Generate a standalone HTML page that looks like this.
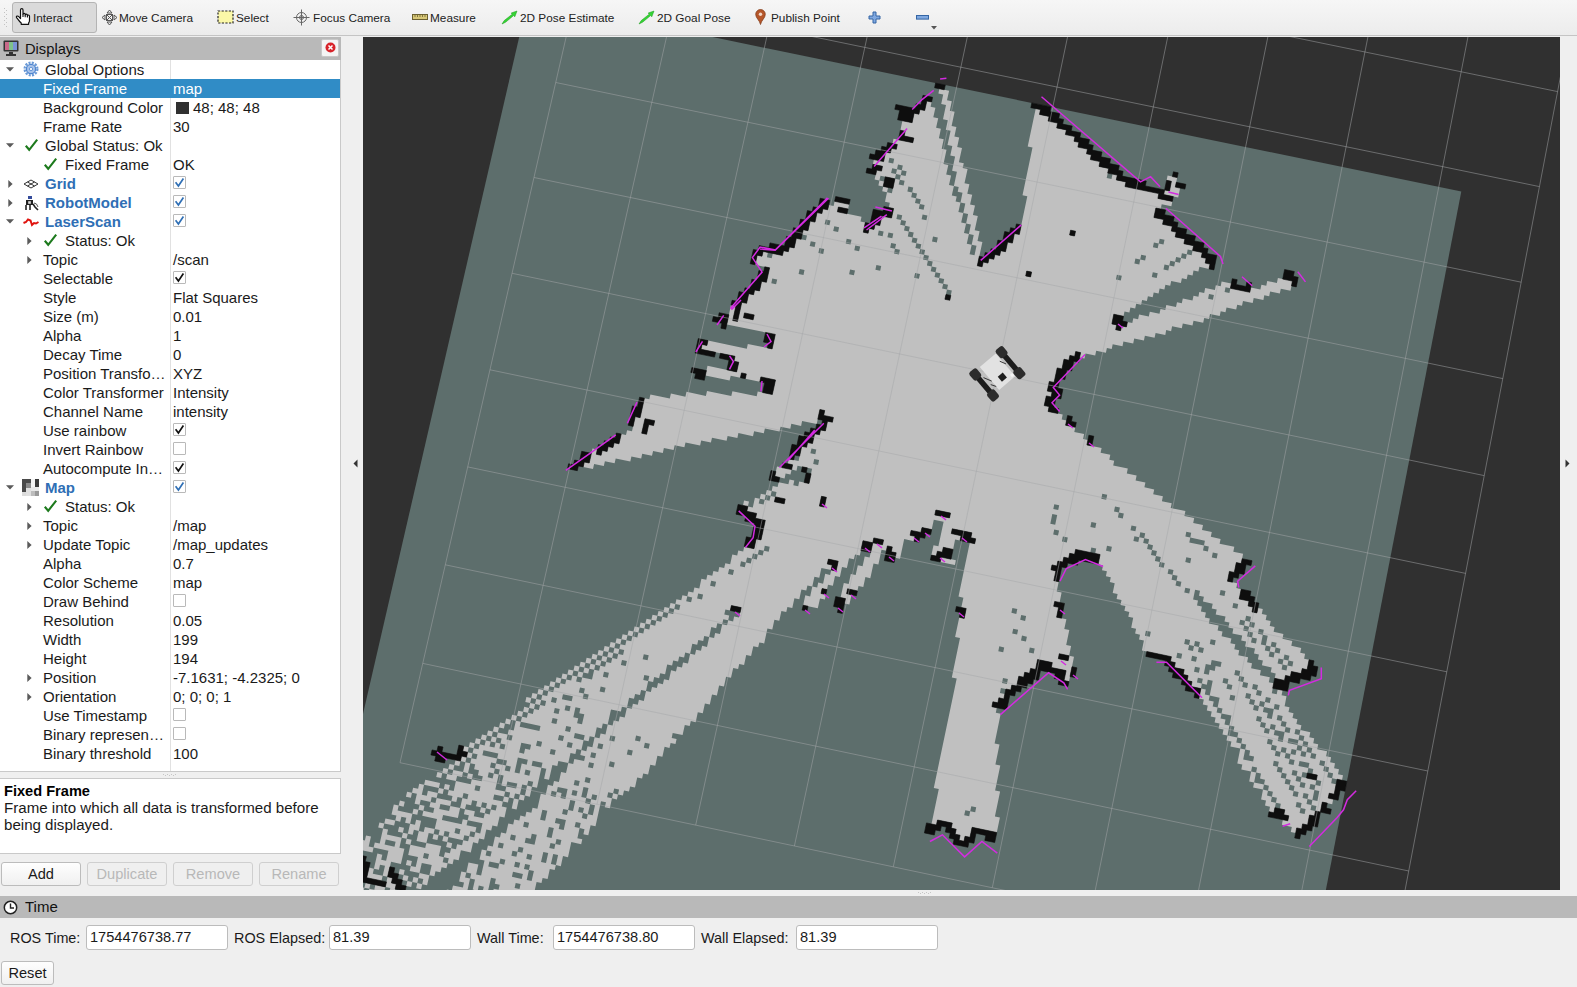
<!DOCTYPE html>
<html lang="en"><head><meta charset="utf-8"><title>RViz</title>
<style>
html,body{margin:0;padding:0;}
body{width:1577px;height:987px;overflow:hidden;background:#efefef;font-family:"Liberation Sans", sans-serif;font-size:14.6px;color:#1a1a1a;position:relative;}
.abs{position:absolute;}
#toolbar{position:absolute;left:0;top:0;width:1577px;height:35px;background:linear-gradient(#f6f6f6,#ececec);border-bottom:1px solid #c4c4c4;}
.tb{position:absolute;top:1px;height:35px;line-height:35px;font-size:11.8px;color:#222;white-space:nowrap;}
#interact{position:absolute;left:12px;top:2px;width:83px;height:29px;border:1px solid #b4b4b4;border-radius:3px;background:#dadada;}
.ic{position:absolute;display:block;}
#dhead{position:absolute;left:0;top:37px;width:341px;height:23px;background:#b9b9b9;}
#dhead .t{position:absolute;left:25px;top:1px;line-height:22px;font-size:14.7px;color:#111;}
#tree{position:absolute;left:0;top:60px;width:341px;height:712px;background:#fff;border-right:1px solid #c9c9c9;border-bottom:1px solid #c9c9c9;box-sizing:border-box;}
#colsep{position:absolute;left:170px;top:60px;width:1px;height:711px;background:#e1e1e1;}
.lb,.vl{position:absolute;height:19px;line-height:19px;white-space:nowrap;font-size:15px;}
.bd{font-weight:bold;color:#2f6fb5;}
.wh{color:#fff;}
.sel{position:absolute;left:0;width:340px;height:19px;background:#308cc6;}
.sw{position:absolute;width:13px;height:12px;background:#303030;}
.cb{position:absolute;width:13px;height:13px;box-sizing:border-box;border:1px solid #b9b9b9;background:#fff;border-radius:1px;}
.cb svg{position:absolute;left:-1px;top:-1px;}
#desc{position:absolute;left:0;top:778px;width:341px;height:76px;background:#fff;border:1px solid #c9c9c9;border-left:none;box-sizing:border-box;}
#desc b{position:absolute;left:4px;top:4px;font-size:14.6px;color:#000;}
#desc p{position:absolute;left:4px;top:20px;margin:0;width:336px;line-height:17px;font-size:15.1px;}
.btn{position:absolute;height:24px;box-sizing:border-box;border:1px solid #bcbcbc;border-radius:3px;background:linear-gradient(#fefefe,#f0f0f0);text-align:center;line-height:22px;font-size:14.6px;color:#1a1a1a;}
.btn.dis{color:#b8b8b8;background:#efefef;border-color:#cfcfcf;}
#thead{position:absolute;left:0;top:896px;width:1577px;height:22px;background:#b9b9b9;}
#thead .t{position:absolute;left:25px;top:0;line-height:22px;font-size:15px;color:#111;}
.tl{position:absolute;top:929px;height:19px;line-height:19px;white-space:nowrap;font-size:14.4px;}
.inp{position:absolute;top:925px;height:25px;width:142px;box-sizing:border-box;border:1px solid #bcbcbc;border-radius:3px;background:#fff;line-height:23px;padding-left:3px;font-size:14.6px;}
#view{position:absolute;left:363px;top:37px;width:1197px;height:853px;background:#303030;overflow:hidden;}
</style></head><body>
<div id="toolbar">
<svg class="ic" style="left:4px;top:8px" width="4" height="20" viewBox="0 0 4 20"><g fill="#c2c2c2"><rect x="0" y="0" width="1" height="1"/><rect x="2" y="2" width="1" height="1"/><rect x="0" y="4" width="1" height="1"/><rect x="2" y="6" width="1" height="1"/><rect x="0" y="8" width="1" height="1"/><rect x="2" y="10" width="1" height="1"/><rect x="0" y="12" width="1" height="1"/><rect x="2" y="14" width="1" height="1"/><rect x="0" y="16" width="1" height="1"/><rect x="2" y="18" width="1" height="1"/></g></svg>
<div id="interact"></div>
<svg class="ic" style="left:15px;top:8px" width="16" height="17" viewBox="0 0 16 17"><path d="M5.5 9.8 V2 Q5.5 0.7 6.8 0.7 Q8 0.7 8 2 V6.4 Q8 5.3 9.1 5.3 Q10.2 5.3 10.2 6.6 V7.2 Q10.3 6.1 11.3 6.1 Q12.4 6.1 12.4 7.4 V8 Q12.5 7 13.4 7 Q14.5 7 14.5 8.3 V12.5 Q14.5 14 13.6 15 V16.3 H6.2 V15 Q4.5 13.5 3.4 11.8 L1.6 9.6 Q1 8.6 2 8.1 Q3 7.7 3.8 8.7 L5.5 10.6 Z" fill="#fff" stroke="#111" stroke-width="1.2" stroke-linejoin="round"/><path d="M8 6.4 V9 M10.2 7.2 V9.3 M12.4 8 V9.6" stroke="#111" stroke-width="1.1" fill="none"/></svg>
<span class="tb" style="left:33px">Interact</span>
<svg class="ic" style="left:101px;top:9px" width="17" height="17" viewBox="0 0 17 17"><g fill="none" stroke="#555" stroke-width="1"><path d="M8.5 1 L6 4 H11 Z M8.5 16 L6 13 H11 Z M1 8.5 L4 6 V11 Z M16 8.5 L13 6 V11 Z"/><rect x="5.5" y="5.5" width="6" height="6"/><path d="M5.5 5.5 L11.5 11.5 M11.5 5.5 L5.5 11.5"/></g></svg>
<span class="tb" style="left:119px">Move Camera</span>
<svg class="ic" style="left:217px;top:10px" width="17" height="14" viewBox="0 0 17 14"><rect x="1" y="1" width="15" height="12" fill="#fbf8a8" stroke="#222" stroke-width="1.2" stroke-dasharray="2.2 1.4"/></svg>
<span class="tb" style="left:236px">Select</span>
<svg class="ic" style="left:293px;top:9px" width="17" height="17" viewBox="0 0 17 17"><g fill="none" stroke="#666" stroke-width="1"><circle cx="8.5" cy="8.5" r="5"/><circle cx="8.5" cy="8.5" r="2"/><path d="M8.5 0.5 V16.5 M0.5 8.5 H16.5"/></g></svg>
<span class="tb" style="left:313px">Focus Camera</span>
<svg class="ic" style="left:412px;top:14px" width="16" height="6" viewBox="0 0 16 6"><rect x="0.5" y="0.5" width="15" height="5" fill="#d8c878" stroke="#6b6030" stroke-width="1"/><path d="M3 1 V3 M5.5 1 V3 M8 1 V3 M10.5 1 V3 M13 1 V3" stroke="#6b6030" stroke-width="0.8"/></svg>
<span class="tb" style="left:430px">Measure</span>
<svg class="ic" style="left:501px;top:10px" width="17" height="15" viewBox="0 0 17 15"><path d="M1 14 L3.2 10.6 L11.2 4.2 L10.2 3 L16 1 L13.8 6.8 L12.6 5.6 L4.6 12.2 Z" fill="#35d435" stroke="#1a9a1a" stroke-width="0.5"/></svg>
<span class="tb" style="left:520px">2D Pose Estimate</span>
<svg class="ic" style="left:638px;top:10px" width="17" height="15" viewBox="0 0 17 15"><path d="M1 14 L3.2 10.6 L11.2 4.2 L10.2 3 L16 1 L13.8 6.8 L12.6 5.6 L4.6 12.2 Z" fill="#35d435" stroke="#1a9a1a" stroke-width="0.5"/></svg>
<span class="tb" style="left:657px">2D Goal Pose</span>
<svg class="ic" style="left:755px;top:9px" width="11" height="16" viewBox="0 0 11 16"><path d="M5.5 15.5 C4.5 11 0.7 9 0.7 5.3 A4.8 4.8 0 0 1 10.3 5.3 C10.3 9 6.5 11 5.5 15.5 Z" fill="#b5562a" stroke="#7d3513" stroke-width="0.7"/><circle cx="5.5" cy="5.2" r="1.7" fill="#f0d7c8"/></svg>
<span class="tb" style="left:771px">Publish Point</span>
<svg class="ic" style="left:868px;top:11px" width="13" height="13" viewBox="0 0 13 13"><path d="M5 1 H8 V5 H12 V8 H8 V12 H5 V8 H1 V5 H5 Z" fill="#7fa8e0" stroke="#3465a4" stroke-width="1"/></svg>
<svg class="ic" style="left:916px;top:15px" width="13" height="5" viewBox="0 0 13 5"><rect x="0.5" y="0.5" width="12" height="3.6" fill="#7fa8e0" stroke="#3465a4" stroke-width="1"/></svg>
<svg class="ic" style="left:931px;top:26px" width="6" height="4" viewBox="0 0 6 4"><path d="M0 0 H6 L3 3.5 Z" fill="#555"/></svg>

</div>
<div id="dhead">
<svg class="ic" style="left:3px;top:3px" width="17" height="17" viewBox="0 0 17 17"><rect x="0.5" y="0.5" width="15" height="11" rx="1" fill="#333"/><rect x="2" y="2" width="4" height="8" fill="#c96a8a"/><rect x="6" y="2" width="4" height="8" fill="#7fc28a"/><rect x="10" y="2" width="4" height="8" fill="#7a93d6"/><rect x="6" y="12" width="4" height="2" fill="#333"/><rect x="3" y="14" width="10" height="2" fill="#333"/></svg>
<span class="t">Displays</span>
<span class="abs" style="left:321px;top:2px;width:16px;height:16px;background:#f4f4f4;border:1px solid #c8c8c8;border-radius:2px;"></span>
<svg class="ic" style="left:325px;top:5px" width="11" height="11" viewBox="0 0 11 11"><circle cx="5.5" cy="5.5" r="5" fill="#d8232a"/><path d="M3.5 3.5 L7.5 7.5 M7.5 3.5 L3.5 7.5" stroke="#fff" stroke-width="1.5"/></svg>
</div>
<div id="tree"></div>
<div id="colsep"></div>
<svg class="ic" style="left:6px;top:67.0px" width="8" height="5" viewBox="0 0 8 5"><path d="M0 0.3 H8 L4 4.6 Z" fill="#5a5a5a"/></svg><svg class="ic" style="left:23px;top:61px" width="16" height="16" viewBox="0 0 16 16"><circle cx="8" cy="8" r="6.4" fill="none" stroke="#6b9ad6" stroke-width="2.2" stroke-dasharray="2.1 1.25"/><circle cx="8" cy="8" r="4.6" fill="#a9c4ea" stroke="#4f86cf" stroke-width="1.3"/><circle cx="8" cy="8" r="1.7" fill="#eaf1fb" stroke="#4f86cf" stroke-width="0.8"/></svg><span class="lb" style="left:45px;top:60.0px">Global Options</span><div class="sel" style="top:79.0px"></div><span class="lb wh" style="left:43px;top:79.0px">Fixed Frame</span><span class="vl wh" style="left:173px;top:79.0px">map</span><span class="lb" style="left:43px;top:98.0px">Background Color</span><span class="sw" style="left:176px;top:102px"></span><span class="vl" style="left:193px;top:98.0px">48; 48; 48</span><span class="lb" style="left:43px;top:117.0px">Frame Rate</span><span class="vl" style="left:173px;top:117.0px">30</span><svg class="ic" style="left:6px;top:143.0px" width="8" height="5" viewBox="0 0 8 5"><path d="M0 0.3 H8 L4 4.6 Z" fill="#5a5a5a"/></svg><svg class="ic" style="left:24px;top:138px" width="16" height="16" viewBox="0 0 16 16"><path d="M1.8 7.8 L5.2 11.8 L13.2 1.6" fill="none" stroke="#1d7a1d" stroke-width="2.1"/></svg><span class="lb" style="left:45px;top:136.0px">Global Status: Ok</span><svg class="ic" style="left:43px;top:157px" width="16" height="16" viewBox="0 0 16 16"><path d="M1.8 7.8 L5.2 11.8 L13.2 1.6" fill="none" stroke="#1d7a1d" stroke-width="2.1"/></svg><span class="lb" style="left:65px;top:155.0px">Fixed Frame</span><span class="vl" style="left:173px;top:155.0px">OK</span><svg class="ic" style="left:7.5px;top:179.5px" width="5" height="8" viewBox="0 0 5 8"><path d="M0.3 0 V8 L4.6 4 Z" fill="#5a5a5a"/></svg><svg class="ic" style="left:23px;top:176px" width="16" height="16" viewBox="0 0 16 16"><g fill="none" stroke="#333" stroke-width="1"><path d="M1 8 L8 4 L15 8 L8 12 Z"/><path d="M4.5 6 L11.5 10 M11.5 6 L4.5 10"/></g></svg><span class="lb bd" style="left:45px;top:174.0px">Grid</span><span class="cb" style="left:173px;top:176px"><svg width="13" height="13" viewBox="0 0 13 13"><path d="M2.6 6.2 L5.4 10 L10.4 2.6" fill="none" stroke="#2f6fb5" stroke-width="1.7"/></svg></span><svg class="ic" style="left:7.5px;top:198.5px" width="5" height="8" viewBox="0 0 5 8"><path d="M0.3 0 V8 L4.6 4 Z" fill="#5a5a5a"/></svg><svg class="ic" style="left:23px;top:195px" width="16" height="16" viewBox="0 0 16 16"><rect x="5" y="1" width="4" height="3" fill="#334a9a"/><rect x="3" y="5" width="7" height="5" fill="#222"/><rect x="5.2" y="6.2" width="2.6" height="2.6" fill="#ddd"/><path d="M3 10 v5 M7 10 v5 M10 9 l2 3 l3 3" stroke="#222" stroke-width="1.6" fill="none"/><path d="M11 8 q3 0 4 4" stroke="#555" stroke-width="1" fill="none"/></svg><span class="lb bd" style="left:45px;top:193.0px">RobotModel</span><span class="cb" style="left:173px;top:195px"><svg width="13" height="13" viewBox="0 0 13 13"><path d="M2.6 6.2 L5.4 10 L10.4 2.6" fill="none" stroke="#2f6fb5" stroke-width="1.7"/></svg></span><svg class="ic" style="left:6px;top:219.0px" width="8" height="5" viewBox="0 0 8 5"><path d="M0 0.3 H8 L4 4.6 Z" fill="#5a5a5a"/></svg><svg class="ic" style="left:23px;top:214px" width="16" height="16" viewBox="0 0 16 16"><path d="M0.5 9 L3 8 L5 5.5 L7.5 6.5 L9 11 L11 9 L13 9.5 L15.5 8" fill="none" stroke="#e0140f" stroke-width="2"/></svg><span class="lb bd" style="left:45px;top:212.0px">LaserScan</span><span class="cb" style="left:173px;top:214px"><svg width="13" height="13" viewBox="0 0 13 13"><path d="M2.6 6.2 L5.4 10 L10.4 2.6" fill="none" stroke="#2f6fb5" stroke-width="1.7"/></svg></span><svg class="ic" style="left:26.5px;top:236.5px" width="5" height="8" viewBox="0 0 5 8"><path d="M0.3 0 V8 L4.6 4 Z" fill="#5a5a5a"/></svg><svg class="ic" style="left:43px;top:233px" width="16" height="16" viewBox="0 0 16 16"><path d="M1.8 7.8 L5.2 11.8 L13.2 1.6" fill="none" stroke="#1d7a1d" stroke-width="2.1"/></svg><span class="lb" style="left:65px;top:231.0px">Status: Ok</span><svg class="ic" style="left:26.5px;top:255.5px" width="5" height="8" viewBox="0 0 5 8"><path d="M0.3 0 V8 L4.6 4 Z" fill="#5a5a5a"/></svg><span class="lb" style="left:43px;top:250.0px">Topic</span><span class="vl" style="left:173px;top:250.0px">/scan</span><span class="lb" style="left:43px;top:269.0px">Selectable</span><span class="cb" style="left:173px;top:271px"><svg width="13" height="13" viewBox="0 0 13 13"><path d="M2.6 6.2 L5.4 10 L10.4 2.6" fill="none" stroke="#111" stroke-width="1.7"/></svg></span><span class="lb" style="left:43px;top:288.0px">Style</span><span class="vl" style="left:173px;top:288.0px">Flat Squares</span><span class="lb" style="left:43px;top:307.0px">Size (m)</span><span class="vl" style="left:173px;top:307.0px">0.01</span><span class="lb" style="left:43px;top:326.0px">Alpha</span><span class="vl" style="left:173px;top:326.0px">1</span><span class="lb" style="left:43px;top:345.0px">Decay Time</span><span class="vl" style="left:173px;top:345.0px">0</span><span class="lb" style="left:43px;top:364.0px">Position Transfo…</span><span class="vl" style="left:173px;top:364.0px">XYZ</span><span class="lb" style="left:43px;top:383.0px">Color Transformer</span><span class="vl" style="left:173px;top:383.0px">Intensity</span><span class="lb" style="left:43px;top:402.0px">Channel Name</span><span class="vl" style="left:173px;top:402.0px">intensity</span><span class="lb" style="left:43px;top:421.0px">Use rainbow</span><span class="cb" style="left:173px;top:423px"><svg width="13" height="13" viewBox="0 0 13 13"><path d="M2.6 6.2 L5.4 10 L10.4 2.6" fill="none" stroke="#111" stroke-width="1.7"/></svg></span><span class="lb" style="left:43px;top:440.0px">Invert Rainbow</span><span class="cb" style="left:173px;top:442px"></span><span class="lb" style="left:43px;top:459.0px">Autocompute In…</span><span class="cb" style="left:173px;top:461px"><svg width="13" height="13" viewBox="0 0 13 13"><path d="M2.6 6.2 L5.4 10 L10.4 2.6" fill="none" stroke="#111" stroke-width="1.7"/></svg></span><svg class="ic" style="left:6px;top:485.0px" width="8" height="5" viewBox="0 0 8 5"><path d="M0 0.3 H8 L4 4.6 Z" fill="#5a5a5a"/></svg><svg class="ic" style="left:22px;top:479px" width="18" height="17" viewBox="0 0 18 17"><rect x="0" y="0" width="17" height="17" fill="#bdbdbd"/><rect x="0" y="0" width="9" height="4" fill="#4a4a4a"/><rect x="0" y="4" width="4" height="9" fill="#4a4a4a"/><rect x="4" y="4" width="5" height="5" fill="#8a8a8a"/><rect x="9" y="0" width="4" height="8" fill="#f4f4f4"/><rect x="13" y="0" width="4" height="8" fill="#3a3a3a"/><rect x="9" y="8" width="8" height="4" fill="#e8e8e8"/><rect x="4" y="9" width="5" height="8" fill="#e0e0e0"/><rect x="0" y="13" width="4" height="4" fill="#dcdcdc"/><rect x="13" y="12" width="4" height="5" fill="#9a9a9a"/></svg><span class="lb bd" style="left:45px;top:478.0px">Map</span><span class="cb" style="left:173px;top:480px"><svg width="13" height="13" viewBox="0 0 13 13"><path d="M2.6 6.2 L5.4 10 L10.4 2.6" fill="none" stroke="#2f6fb5" stroke-width="1.7"/></svg></span><svg class="ic" style="left:26.5px;top:502.5px" width="5" height="8" viewBox="0 0 5 8"><path d="M0.3 0 V8 L4.6 4 Z" fill="#5a5a5a"/></svg><svg class="ic" style="left:43px;top:499px" width="16" height="16" viewBox="0 0 16 16"><path d="M1.8 7.8 L5.2 11.8 L13.2 1.6" fill="none" stroke="#1d7a1d" stroke-width="2.1"/></svg><span class="lb" style="left:65px;top:497.0px">Status: Ok</span><svg class="ic" style="left:26.5px;top:521.5px" width="5" height="8" viewBox="0 0 5 8"><path d="M0.3 0 V8 L4.6 4 Z" fill="#5a5a5a"/></svg><span class="lb" style="left:43px;top:516.0px">Topic</span><span class="vl" style="left:173px;top:516.0px">/map</span><svg class="ic" style="left:26.5px;top:540.5px" width="5" height="8" viewBox="0 0 5 8"><path d="M0.3 0 V8 L4.6 4 Z" fill="#5a5a5a"/></svg><span class="lb" style="left:43px;top:535.0px">Update Topic</span><span class="vl" style="left:173px;top:535.0px">/map_updates</span><span class="lb" style="left:43px;top:554.0px">Alpha</span><span class="vl" style="left:173px;top:554.0px">0.7</span><span class="lb" style="left:43px;top:573.0px">Color Scheme</span><span class="vl" style="left:173px;top:573.0px">map</span><span class="lb" style="left:43px;top:592.0px">Draw Behind</span><span class="cb" style="left:173px;top:594px"></span><span class="lb" style="left:43px;top:611.0px">Resolution</span><span class="vl" style="left:173px;top:611.0px">0.05</span><span class="lb" style="left:43px;top:630.0px">Width</span><span class="vl" style="left:173px;top:630.0px">199</span><span class="lb" style="left:43px;top:649.0px">Height</span><span class="vl" style="left:173px;top:649.0px">194</span><svg class="ic" style="left:26.5px;top:673.5px" width="5" height="8" viewBox="0 0 5 8"><path d="M0.3 0 V8 L4.6 4 Z" fill="#5a5a5a"/></svg><span class="lb" style="left:43px;top:668.0px">Position</span><span class="vl" style="left:173px;top:668.0px">-7.1631; -4.2325; 0</span><svg class="ic" style="left:26.5px;top:692.5px" width="5" height="8" viewBox="0 0 5 8"><path d="M0.3 0 V8 L4.6 4 Z" fill="#5a5a5a"/></svg><span class="lb" style="left:43px;top:687.0px">Orientation</span><span class="vl" style="left:173px;top:687.0px">0; 0; 0; 1</span><span class="lb" style="left:43px;top:706.0px">Use Timestamp</span><span class="cb" style="left:173px;top:708px"></span><span class="lb" style="left:43px;top:725.0px">Binary represen…</span><span class="cb" style="left:173px;top:727px"></span><span class="lb" style="left:43px;top:744.0px">Binary threshold</span><span class="vl" style="left:173px;top:744.0px">100</span>
<div id="desc"><b>Fixed Frame</b><p>Frame into which all data is transformed before being displayed.</p></div>
<div class="btn" style="left:1px;top:862px;width:80px;">Add</div>
<div class="btn dis" style="left:87px;top:862px;width:80px;">Duplicate</div>
<div class="btn dis" style="left:173px;top:862px;width:80px;">Remove</div>
<div class="btn dis" style="left:259px;top:862px;width:80px;">Rename</div>
<div id="thead">
<svg class="ic" style="left:3px;top:4px" width="15" height="15" viewBox="0 0 15 15"><circle cx="7.5" cy="7.5" r="6.2" fill="#fff" stroke="#222" stroke-width="1.5"/><path d="M7.5 3.5 V8 H11" fill="none" stroke="#222" stroke-width="1.4"/></svg>
<span class="t">Time</span></div>
<span class="tl" style="left:10px">ROS Time:</span><div class="inp" style="left:86px">1754476738.77</div>
<span class="tl" style="left:234px">ROS Elapsed:</span><div class="inp" style="left:329px">81.39</div>
<span class="tl" style="left:477px">Wall Time:</span><div class="inp" style="left:553px">1754476738.80</div>
<span class="tl" style="left:701px">Wall Elapsed:</span><div class="inp" style="left:796px">81.39</div>
<div class="btn" style="left:1px;top:961px;width:53px;">Reset</div>
<svg class="ic" style="left:353px;top:459px" width="5" height="9" viewBox="0 0 5 9"><path d="M4.5 0.5 V8.5 L0.5 4.5 Z" fill="#333"/></svg>
<svg class="ic" style="left:1565px;top:459px" width="5" height="9" viewBox="0 0 5 9"><path d="M0.5 0.5 V8.5 L4.5 4.5 Z" fill="#333"/></svg>
<svg class="ic" style="left:163px;top:774px" width="14" height="2" viewBox="0 0 14 2"><g fill="#c6c6c6"><rect x="0" y="0" width="1" height="1"/><rect x="2" y="1" width="1" height="1"/><rect x="4" y="0" width="1" height="1"/><rect x="6" y="1" width="1" height="1"/><rect x="8" y="0" width="1" height="1"/><rect x="10" y="1" width="1" height="1"/><rect x="12" y="0" width="1" height="1"/></g></svg>
<svg class="ic" style="left:918px;top:892px" width="14" height="2" viewBox="0 0 14 2"><g fill="#c6c6c6"><rect x="0" y="0" width="1" height="1"/><rect x="2" y="1" width="1" height="1"/><rect x="4" y="0" width="1" height="1"/><rect x="6" y="1" width="1" height="1"/><rect x="8" y="0" width="1" height="1"/><rect x="10" y="1" width="1" height="1"/><rect x="12" y="0" width="1" height="1"/></g></svg>
<div id="view">
<svg width="1197" height="853" viewBox="0 0 1197 853" style="position:absolute;left:0;top:0">
<polygon points="907.5,1138.6 1098.3,154.6 165.0,-38.1 -59.1,933.2" fill="#5d6e6c"/>
<path d="M9.0,862.9L10.1,857.9L15.1,858.9L16.2,853.9L21.2,854.9L22.3,849.9L12.4,847.8L11.3,852.8L6.3,851.8L4.0,861.9ZM-5.8,859.8L-4.7,854.7L0.3,855.8L1.4,850.7L-8.5,848.6L-10.8,858.7ZM34.8,863.1L36.0,858.1L31.1,857.0L29.9,862.1ZM31.1,857.0L33.3,847.0L28.4,845.9L29.6,840.9L24.6,839.8L22.3,849.9L27.3,850.9L26.1,856.0ZM6.3,851.8L7.5,846.8L2.6,845.7L1.4,850.7ZM60.7,863.3L61.9,858.3L56.9,857.2L55.8,862.3ZM50.8,861.2L52.0,856.2L42.1,854.1L40.9,859.1ZM81.6,862.5L82.8,857.4L77.8,856.4L76.7,861.4ZM82.8,857.4L97.6,860.6L98.7,855.5L103.7,856.6L107.1,841.5L102.1,840.5L103.3,835.4L98.3,834.4L96.1,844.4L101.0,845.5L99.9,850.5L90.0,848.4L88.8,853.5L83.9,852.4ZM-2.4,844.7L-1.2,839.6L-6.2,838.6L-7.3,843.6ZM-6.2,838.6L-1.6,818.5L-6.5,817.5L-10.0,832.5L-14.9,831.5L-16.0,836.5ZM112.4,863.7L113.6,858.7L103.7,856.6L102.5,861.6ZM113.6,858.7L118.5,859.7L119.6,854.7L114.7,853.7ZM58.1,852.2L59.2,847.2L54.3,846.1L53.1,851.2ZM59.2,847.2L64.1,848.2L66.4,838.2L56.5,836.1L55.4,841.1L60.3,842.1ZM54.3,846.1L55.4,841.1L50.5,840.1L49.3,845.1ZM48.2,850.1L49.3,845.1L44.4,844.0L43.2,849.1ZM44.4,844.0L45.5,839.0L40.6,838.0L39.4,843.0ZM24.6,839.8L28.1,824.8L37.9,826.9L41.4,811.8L36.4,810.8L38.7,800.7L23.9,797.6L25.1,792.6L20.1,791.6L16.7,806.6L11.8,805.5L10.6,810.6L25.4,813.7L23.1,823.7L18.2,822.7L19.3,817.7L14.4,816.6L10.9,831.7L15.9,832.7L17.0,827.7L22.0,828.8L19.7,838.8ZM18.5,843.8L19.7,838.8L9.8,836.7L10.9,831.7L6.0,830.6L3.7,840.7ZM138.3,863.9L139.4,858.9L159.2,863.1L161.4,853.0L166.4,854.1L165.3,859.1L170.2,860.1L173.6,845.1L178.5,846.1L179.6,841.1L184.6,842.1L186.8,832.1L191.7,833.1L192.9,828.1L187.9,827.1L190.2,817.0L195.1,818.1L192.9,828.1L197.8,829.2L200.0,819.1L205.0,820.2L208.3,805.1L218.2,807.2L219.3,802.2L214.4,801.2L216.6,791.1L211.6,790.1L212.8,785.1L217.7,786.1L216.6,791.1L221.5,792.2L220.4,797.2L225.3,798.2L227.6,788.2L232.5,789.3L238.0,764.3L243.0,765.3L241.8,770.3L246.8,771.3L249.0,761.3L244.1,760.3L245.2,755.3L250.1,756.3L251.2,751.4L256.1,752.4L255.0,757.4L259.9,758.4L261.0,753.4L266.0,754.5L267.1,749.5L272.0,750.5L274.2,740.5L279.1,741.6L280.2,736.6L285.1,737.6L287.3,727.7L292.3,728.7L294.4,718.7L299.4,719.8L301.6,709.8L306.5,710.9L307.6,705.9L312.5,706.9L313.6,702.0L308.7,700.9L309.7,695.9L319.6,698.0L321.8,688.1L326.7,689.1L327.8,684.1L332.7,685.2L334.8,675.3L339.8,676.3L341.9,666.4L346.8,667.4L349.0,657.5L353.9,658.5L356.1,648.6L361.0,649.6L363.1,639.7L368.0,640.8L370.2,630.9L375.1,631.9L376.2,627.0L381.1,628.0L383.2,618.1L388.1,619.1L390.3,609.3L395.2,610.3L396.3,605.4L401.2,606.4L404.4,591.6L409.3,592.6L411.4,582.7L416.3,583.8L418.4,573.9L423.3,574.9L424.4,570.0L429.3,571.1L431.4,561.2L436.3,562.2L438.4,552.4L443.3,553.4L444.4,548.5L449.3,549.5L451.4,539.7L456.3,540.7L458.4,530.9L468.2,533.0L469.2,528.1L464.3,527.0L465.4,522.1L475.2,524.2L473.1,534.0L468.2,533.0L467.1,537.9L462.2,536.8L460.1,546.7L455.2,545.6L454.2,550.6L449.3,549.5L447.2,559.4L442.3,558.3L440.2,568.2L454.8,571.3L457.0,561.4L461.9,562.5L462.9,557.5L458.0,556.5L459.1,551.6L464.0,552.6L465.0,547.7L469.9,548.7L472.0,538.9L476.9,539.9L479.0,530.1L483.9,531.1L486.0,521.3L490.9,522.3L492.0,517.4L496.8,518.5L500.0,503.7L509.8,505.8L510.8,500.9L520.6,502.9L519.5,507.8L509.8,505.8L506.6,520.5L501.7,519.5L499.6,529.3L494.8,528.3L492.7,538.1L487.8,537.1L485.7,546.9L480.8,545.9L477.6,560.6L482.5,561.6L481.5,566.6L486.4,567.6L488.5,557.7L483.6,556.7L484.6,551.8L494.4,553.9L495.5,548.9L500.3,550.0L502.4,540.1L507.3,541.2L510.5,526.4L515.4,527.5L518.5,512.7L523.4,513.8L524.4,508.9L529.3,509.9L528.3,514.8L533.2,515.8L532.1,520.7L537.0,521.7L541.2,502.1L551.0,504.2L552.0,499.3L547.1,498.3L548.1,493.4L557.9,495.4L559.0,490.5L568.7,492.6L570.8,482.8L580.6,484.8L575.4,509.3L570.5,508.3L568.4,518.1L573.3,519.1L574.4,514.2L579.3,515.2L580.3,510.3L590.1,512.4L592.1,502.6L597.0,503.6L598.1,498.7L588.3,496.6L589.3,491.8L608.9,495.8L607.8,500.7L612.7,501.8L611.7,506.7L606.8,505.6L595.5,559.6L600.4,560.7L598.3,570.5L603.2,571.5L601.2,581.4L596.3,580.3L592.1,600.1L597.0,601.1L588.8,640.6L593.7,641.6L570.8,750.9L575.8,752.0L568.5,787.0L573.4,788.0L574.5,783.0L589.3,786.1L588.2,791.1L593.2,792.2L592.1,797.2L597.1,798.2L596.0,803.2L601.0,804.3L602.0,799.3L607.0,800.3L609.1,790.3L633.8,795.5L636.9,780.5L631.9,779.5L637.1,754.5L632.1,753.4L637.3,728.5L632.4,727.5L636.5,707.6L631.6,706.5L637.7,676.8L632.8,675.7L633.8,670.8L628.9,669.7L629.9,664.8L634.9,665.8L635.9,660.8L640.8,661.9L641.8,656.9L636.9,655.9L637.9,650.9L647.8,653.0L648.8,648.1L653.7,649.1L655.8,639.2L660.7,640.2L661.7,635.3L666.6,636.3L667.6,631.4L672.6,632.4L674.6,622.5L689.3,625.6L688.3,630.5L703.1,633.6L701.0,643.5L706.0,644.6L711.0,619.8L706.1,618.8L705.1,623.7L695.3,621.7L696.3,616.7L706.1,618.8L708.1,608.9L703.2,607.9L706.3,593.1L701.3,592.1L703.4,582.2L693.6,580.2L695.6,570.3L690.7,569.3L691.7,564.4L696.6,565.4L698.6,555.6L693.7,554.5L695.7,544.7L690.8,543.7L692.9,533.9L688.0,532.8L689.0,527.9L693.9,529.0L694.9,524.1L699.8,525.1L700.8,520.2L705.7,521.2L706.7,516.3L711.6,517.3L712.6,512.4L727.3,515.5L728.3,510.6L733.2,511.6L732.2,516.5L737.1,517.5L735.1,527.3L740.0,528.4L739.0,533.3L743.9,534.3L742.9,539.2L747.8,540.2L746.8,545.1L751.7,546.2L749.7,556.0L754.6,557.0L753.6,561.9L758.5,563.0L757.5,567.9L762.4,568.9L761.4,573.8L766.3,574.9L765.3,579.8L770.2,580.8L768.2,590.7L773.1,591.7L772.1,596.6L777.0,597.7L776.0,602.6L780.9,603.6L778.9,613.5L808.4,619.7L807.4,624.6L812.3,625.6L811.3,630.6L821.2,632.6L820.2,637.6L825.1,638.6L824.1,643.6L829.0,644.6L828.0,649.5L837.9,651.6L838.9,646.6L833.9,645.6L834.9,640.7L839.8,641.7L838.9,646.6L843.8,647.7L844.8,642.7L849.7,643.8L846.7,658.6L856.6,660.7L854.6,670.6L859.5,671.6L858.5,676.6L868.4,678.6L866.4,688.6L871.4,689.6L870.4,694.6L875.3,695.6L874.3,700.6L879.2,701.6L878.3,706.6L883.2,707.6L882.2,712.6L887.1,713.6L886.2,718.6L891.1,719.6L890.1,724.6L880.2,722.5L882.2,712.6L877.3,711.5L874.3,726.5L879.3,727.5L878.3,732.5L888.1,734.6L889.1,729.6L894.1,730.6L893.1,735.6L898.0,736.6L897.0,741.6L902.0,742.7L901.0,747.6L905.9,748.7L905.0,753.7L909.9,754.7L908.9,759.7L913.9,760.7L912.9,765.7L917.8,766.8L916.9,771.7L921.8,772.8L920.8,777.8L925.8,778.8L924.8,783.8L919.8,782.8L918.9,787.8L928.8,789.9L927.8,794.9L932.7,795.9L933.7,790.9L938.7,791.9L939.6,786.9L944.6,788.0L946.5,778.0L951.5,779.0L952.4,774.0L947.5,773.0L948.5,768.0L943.5,767.0L944.5,762.0L939.6,760.9L940.5,755.9L945.5,757.0L944.5,762.0L949.4,763.0L951.4,753.0L946.4,752.0L947.4,747.0L952.4,748.1L953.3,743.1L938.5,740.0L937.5,744.9L942.5,746.0L941.5,751.0L936.6,749.9L937.5,744.9L932.6,743.9L933.6,738.9L928.6,737.9L929.6,732.9L934.5,733.9L933.6,738.9L938.5,740.0L939.5,735.0L944.4,736.0L945.4,731.0L935.5,729.0L936.5,724.0L946.4,726.1L945.4,731.0L950.3,732.1L949.4,737.1L954.3,738.1L953.3,743.1L958.3,744.1L957.3,749.1L952.4,748.1L951.4,753.0L956.3,754.1L954.4,764.1L949.4,763.0L948.5,768.0L953.4,769.0L952.4,774.0L957.4,775.1L959.3,765.1L969.2,767.2L970.2,762.2L965.2,761.1L966.2,756.2L971.2,757.2L973.1,747.2L968.2,746.2L969.1,741.2L964.2,740.2L965.2,735.2L960.2,734.1L961.2,729.2L956.2,728.1L957.2,723.2L962.2,724.2L961.2,729.2L966.1,730.2L965.2,735.2L970.1,736.2L969.1,741.2L979.0,743.3L980.0,738.3L975.0,737.3L976.0,732.3L971.1,731.2L972.0,726.3L967.1,725.2L968.1,720.3L963.1,719.2L964.1,714.2L954.2,712.2L955.2,707.2L950.3,706.2L951.2,701.2L946.3,700.2L947.3,695.2L937.4,693.1L936.4,698.1L941.4,699.1L940.4,704.1L945.3,705.1L944.4,710.1L949.3,711.1L948.3,716.1L953.3,717.1L952.3,722.1L947.3,721.1L948.3,716.1L943.4,715.1L942.4,720.0L937.5,719.0L938.4,714.0L933.5,713.0L932.5,718.0L927.6,716.9L926.6,721.9L931.6,722.9L930.6,727.9L925.6,726.9L926.6,721.9L921.7,720.9L922.7,715.9L917.7,714.9L916.8,719.8L911.8,718.8L912.8,713.8L907.9,712.8L908.8,707.8L903.9,706.8L904.9,701.8L909.8,702.9L908.8,707.8L913.8,708.9L912.8,713.8L917.7,714.9L918.7,709.9L923.6,710.9L922.7,715.9L927.6,716.9L928.6,712.0L933.5,713.0L934.5,708.0L924.6,706.0L925.6,701.0L935.5,703.1L936.4,698.1L931.5,697.1L932.5,692.1L937.4,693.1L938.4,688.2L933.4,687.1L934.4,682.2L929.5,681.1L930.5,676.2L925.5,675.1L926.5,670.2L921.6,669.2L923.5,659.2L918.6,658.2L919.6,653.3L914.7,652.2L913.7,657.2L908.8,656.2L910.7,646.3L905.8,645.2L906.8,640.3L896.9,638.2L897.9,633.3L888.1,631.2L889.0,626.3L884.1,625.2L885.1,620.3L875.3,618.2L876.2,613.3L871.3,612.3L872.3,607.3L867.4,606.3L868.4,601.4L858.6,599.3L859.5,594.4L854.6,593.4L855.6,588.4L845.8,586.4L846.8,581.5L841.9,580.4L842.9,575.5L837.9,574.5L838.9,569.6L834.0,568.5L835.0,563.6L830.1,562.6L832.1,552.8L837.0,553.8L836.0,558.7L840.9,559.7L839.9,564.6L849.7,566.7L848.7,571.6L853.7,572.6L852.7,577.6L862.5,579.6L861.5,584.5L866.4,585.6L865.4,590.5L870.3,591.5L869.4,596.4L879.2,598.5L878.2,603.4L883.1,604.5L882.1,609.4L892.0,611.5L891.0,616.4L895.9,617.4L894.9,622.4L899.9,623.4L898.9,628.3L908.7,630.4L907.7,635.3L912.7,636.4L911.7,641.3L921.5,643.4L922.5,638.4L927.4,639.5L928.4,634.5L938.2,636.6L939.2,631.6L944.1,632.7L946.1,622.8L941.1,621.8L942.1,616.8L937.2,615.8L938.2,610.9L928.3,608.8L929.3,603.9L919.5,601.8L920.4,596.9L910.6,594.8L911.6,589.9L906.7,588.9L907.7,583.9L902.7,582.9L903.7,578.0L898.8,577.0L899.8,572.0L894.9,571.0L893.9,575.9L889.0,574.9L890.0,570.0L885.1,569.0L886.0,564.0L876.2,562.0L878.2,552.2L873.3,551.1L874.3,546.2L864.5,544.2L866.4,534.4L871.3,535.4L873.3,525.6L878.2,526.6L880.1,516.8L870.3,514.7L871.3,509.8L856.6,506.8L857.6,501.9L847.8,499.8L848.8,494.9L839.0,492.9L840.0,488.0L830.2,486.0L831.2,481.1L821.4,479.0L822.4,474.1L807.7,471.1L808.7,466.2L798.9,464.2L799.9,459.3L790.2,457.2L791.2,452.4L781.4,450.3L782.4,445.4L772.6,443.4L773.6,438.5L763.8,436.5L764.8,431.6L750.2,428.6L751.2,423.7L746.3,422.7L747.3,417.8L737.6,415.8L738.6,410.9L723.9,407.9L724.9,403.0L720.1,402.0L721.1,397.1L711.3,395.1L712.3,390.3L702.6,388.2L703.6,383.4L698.7,382.4L699.7,377.5L685.1,374.5L686.1,369.6L681.2,368.6L683.3,358.9L688.1,359.9L689.1,355.1L684.3,354.1L686.3,344.4L691.1,345.4L694.2,330.9L699.0,331.9L701.0,322.2L705.9,323.2L706.9,318.4L711.7,319.4L712.7,314.6L717.6,315.6L716.6,320.4L721.5,321.4L722.5,316.6L732.2,318.6L733.2,313.8L742.9,315.8L743.9,311.0L748.7,312.0L749.7,307.2L759.5,309.2L760.4,304.4L770.2,306.4L771.2,301.6L780.9,303.6L781.9,298.8L791.6,300.8L792.6,295.9L802.3,298.0L803.2,293.1L808.1,294.2L809.1,289.3L818.8,291.3L819.8,286.5L829.5,288.5L830.5,283.7L840.2,285.7L841.2,280.9L846.0,281.9L847.0,277.1L856.7,279.1L857.7,274.3L862.5,275.3L863.5,270.5L873.2,272.5L874.2,267.7L879.0,268.7L880.0,263.9L889.7,265.9L890.7,261.1L900.4,263.1L901.3,258.3L906.2,259.3L907.1,254.5L916.8,256.5L917.8,251.7L927.5,253.7L929.4,244.1L914.9,241.1L913.9,245.9L904.2,243.9L903.3,248.7L898.4,247.7L897.4,252.5L887.7,250.5L886.8,255.3L867.4,251.3L866.4,256.1L861.6,255.1L862.5,250.3L867.4,251.3L868.3,246.5L858.6,244.5L857.7,249.3L852.8,248.3L851.9,253.1L842.2,251.1L841.2,255.9L836.3,254.9L835.4,259.7L830.5,258.7L829.5,263.5L819.8,261.5L818.8,266.3L814.0,265.3L813.0,270.1L803.3,268.1L802.3,272.9L797.5,271.9L796.5,276.7L786.8,274.7L785.8,279.5L776.1,277.5L775.1,282.3L770.3,281.3L769.3,286.1L764.4,285.1L763.4,289.9L758.6,288.9L757.6,293.7L752.7,292.7L753.7,287.9L748.9,286.9L750.8,277.2L760.5,279.3L761.5,274.4L766.4,275.4L767.4,270.6L772.2,271.6L773.2,266.8L778.1,267.8L779.1,263.0L783.9,264.0L784.9,259.2L789.7,260.2L790.7,255.4L795.6,256.4L796.6,251.6L801.4,252.6L802.4,247.8L807.2,248.8L808.2,244.0L817.9,246.0L818.9,241.2L823.7,242.2L824.7,237.4L829.6,238.4L830.5,233.6L835.4,234.6L836.4,229.8L846.0,231.9L847.0,227.1L842.2,226.1L843.1,221.3L838.3,220.3L839.3,215.5L829.6,213.5L828.6,218.3L823.8,217.2L822.8,222.0L818.0,221.0L817.0,225.8L812.1,224.8L811.2,229.6L806.3,228.6L805.3,233.4L800.5,232.4L801.5,227.6L806.3,228.6L807.3,223.8L812.1,224.8L813.1,220.0L818.0,221.0L818.9,216.2L823.8,217.2L824.7,212.5L829.6,213.5L830.6,208.7L820.9,206.7L821.9,201.9L812.2,199.9L813.2,195.1L808.3,194.1L809.3,189.3L799.6,187.3L800.6,182.5L790.9,180.5L792.9,171.0L797.7,172.0L798.7,167.2L808.4,169.2L809.3,164.4L794.9,161.4L795.8,156.6L762.0,149.6L763.0,144.9L753.3,142.9L754.3,138.1L749.5,137.1L748.5,141.9L743.7,140.9L745.7,131.4L736.0,129.4L737.0,124.6L727.4,122.6L728.3,117.8L723.5,116.8L724.5,112.1L714.9,110.1L715.9,105.3L711.0,104.3L712.0,99.6L702.4,97.6L703.4,92.9L693.7,90.9L694.7,86.1L685.1,84.1L686.1,79.4L676.5,77.4L677.5,72.6L672.7,71.7L664.7,109.6L669.5,110.6L659.5,158.3L664.3,159.3L656.3,197.5L651.4,196.5L649.4,206.1L644.6,205.1L642.5,214.7L637.7,213.7L636.7,218.5L631.9,217.5L630.8,222.3L626.0,221.3L625.0,226.1L620.2,225.0L619.1,229.8L614.3,228.8L619.4,204.9L614.5,203.9L616.6,194.3L611.7,193.3L614.8,178.9L609.9,177.9L612.0,168.4L607.1,167.4L609.2,157.8L604.3,156.8L606.4,147.3L601.5,146.3L604.6,132.0L599.7,131.0L600.8,126.2L595.9,125.2L599.0,111.0L594.2,110.0L596.2,100.4L591.4,99.5L593.4,90.0L588.6,89.0L591.6,74.7L586.8,73.7L588.8,64.2L584.0,63.2L586.1,53.8L576.4,51.8L575.4,56.5L580.2,57.5L578.2,67.0L583.0,68.0L580.0,82.2L584.8,83.2L582.8,92.7L587.6,93.7L584.5,108.0L589.3,109.0L587.3,118.5L592.1,119.5L589.1,133.8L593.9,134.8L590.9,149.1L595.7,150.1L594.7,154.8L599.5,155.8L597.5,165.4L602.3,166.4L600.3,175.9L605.1,176.9L603.1,186.5L607.9,187.5L605.9,197.1L610.7,198.1L608.7,207.7L613.5,208.7L611.5,218.2L606.6,217.2L608.7,207.7L603.8,206.7L605.9,197.1L601.0,196.1L603.1,186.5L598.2,185.5L600.3,175.9L595.4,174.9L597.5,165.4L592.6,164.4L593.7,159.6L588.8,158.6L590.9,149.1L586.0,148.1L588.1,138.5L583.2,137.5L585.3,128.0L580.5,127.0L583.5,112.7L578.7,111.7L580.7,102.2L575.9,101.2L577.9,91.7L573.1,90.7L575.2,81.2L570.3,80.2L572.4,70.7L567.6,69.7L568.6,65.0L563.8,64.0L561.7,73.5L556.9,72.5L555.9,77.2L551.1,76.2L549.1,85.7L539.4,83.8L537.4,93.2L542.2,94.2L541.2,99.0L550.8,101.0L549.8,105.7L530.5,101.8L529.5,106.5L534.3,107.5L533.3,112.3L528.5,111.3L527.4,116.0L522.6,115.0L520.6,124.6L510.9,122.6L509.9,127.3L519.5,129.3L518.5,134.1L513.7,133.1L511.6,142.6L516.4,143.6L517.5,138.8L531.9,141.8L533.0,137.1L528.1,136.1L529.2,131.3L534.0,132.3L535.0,127.5L539.8,128.5L538.8,133.3L543.6,134.3L542.6,139.1L537.8,138.1L536.8,142.8L541.6,143.8L540.6,148.6L535.7,147.6L536.8,142.8L531.9,141.8L528.9,156.2L524.0,155.2L522.0,164.7L526.8,165.7L525.8,170.5L530.6,171.5L528.5,181.0L518.9,179.0L516.8,188.6L512.0,187.6L511.0,192.4L506.1,191.4L505.1,196.2L500.3,195.2L502.3,185.6L497.5,184.6L498.5,179.8L474.4,174.8L475.4,170.0L485.1,172.0L486.1,167.3L471.6,164.3L470.6,169.0L465.8,168.0L464.7,172.8L459.9,171.8L458.9,176.6L454.0,175.6L452.0,185.1L447.1,184.1L445.0,193.7L440.2,192.7L439.2,197.5L444.0,198.5L442.9,203.3L433.3,201.3L431.2,210.9L426.4,209.9L425.3,214.7L420.5,213.7L419.4,218.5L409.8,216.5L408.7,221.2L403.9,220.2L404.9,215.4L400.1,214.4L399.0,219.2L394.2,218.2L392.1,227.8L406.6,230.8L403.4,245.3L398.6,244.3L396.5,253.9L391.6,252.9L390.6,257.7L385.7,256.7L383.6,266.3L378.8,265.3L374.5,284.5L369.7,283.5L372.9,269.1L368.0,268.1L363.8,287.4L412.3,297.4L409.1,311.9L384.8,306.9L383.8,311.7L345.0,303.6L343.9,308.5L339.1,307.4L338.0,312.3L372.0,319.3L370.9,324.2L375.8,325.2L373.6,334.9L344.5,328.8L342.4,338.5L366.6,343.5L367.7,338.7L377.4,340.7L378.5,335.9L383.3,336.9L382.3,341.7L396.8,344.8L397.9,339.9L412.5,343.0L409.3,357.5L394.7,354.5L393.7,359.3L369.4,354.2L368.3,359.1L344.0,354.0L342.9,358.9L323.5,354.8L322.4,359.7L307.9,356.6L306.8,361.5L287.4,357.4L286.3,362.3L281.4,361.2L277.1,380.7L272.2,379.6L269.0,394.2L264.1,393.2L263.0,398.1L258.2,397.0L256.0,406.8L251.1,405.8L250.0,410.6L245.2,409.6L244.1,414.5L239.2,413.5L238.1,418.3L233.3,417.3L234.3,412.4L229.5,411.4L226.2,426.0L221.3,425.0L220.2,429.9L230.0,431.9L231.1,427.0L240.8,429.1L241.9,424.2L251.6,426.2L252.7,421.4L267.3,424.4L268.4,419.6L278.2,421.6L279.2,416.7L289.0,418.8L290.1,413.9L299.8,415.9L300.9,411.1L310.6,413.1L311.7,408.2L321.4,410.3L322.5,405.4L337.1,408.4L338.2,403.6L347.9,405.6L349.0,400.8L363.6,403.8L364.6,398.9L374.4,401.0L375.4,396.1L390.0,399.2L391.1,394.3L400.8,396.3L401.9,391.5L416.5,394.5L417.6,389.7L427.3,391.7L428.3,386.8L438.1,388.9L439.1,384.0L453.7,387.0L456.9,372.5L461.7,373.5L460.7,378.4L470.4,380.4L469.4,385.2L464.5,384.2L462.4,393.9L457.5,392.9L456.5,397.8L451.6,396.8L449.5,406.5L444.6,405.5L443.6,410.3L438.7,409.3L435.6,423.9L425.8,421.9L424.8,426.8L429.6,427.8L428.6,432.6L433.5,433.7L434.5,428.8L449.1,431.8L446.0,446.5L436.2,444.4L435.2,449.3L430.3,448.3L431.3,443.4L426.5,442.4L425.4,447.3L415.7,445.2L414.6,450.1L409.7,449.1L408.7,454.0L413.5,455.0L412.5,459.9L422.2,461.9L421.2,466.8L411.4,464.8L412.5,459.9L407.6,458.9L406.5,463.7L401.7,462.7L400.6,467.6L395.7,466.6L396.8,461.7L391.9,460.7L389.8,470.5L384.9,469.4L383.8,474.3L393.6,476.4L392.5,481.3L402.3,483.3L398.0,502.9L393.1,501.9L391.0,511.7L381.2,509.6L380.2,514.5L375.3,513.5L374.2,518.4L369.3,517.4L367.2,527.2L362.3,526.2L361.2,531.1L356.3,530.0L355.2,535.0L350.4,533.9L349.3,538.8L344.4,537.8L343.3,542.7L338.4,541.7L336.3,551.5L331.4,550.5L330.3,555.4L325.4,554.4L324.3,559.3L329.2,560.4L328.1,565.3L323.2,564.2L324.3,559.3L319.4,558.3L318.3,563.2L313.4,562.2L312.4,567.1L317.3,568.1L316.2,573.1L311.3,572.0L310.2,577.0L305.3,575.9L304.2,580.9L299.3,579.8L298.2,584.8L293.3,583.7L292.2,588.7L287.3,587.6L286.3,592.6L281.4,591.5L280.3,596.5L275.4,595.4L274.3,600.4L269.4,599.3L268.3,604.3L263.4,603.3L262.3,608.2L257.4,607.2L256.3,612.1L261.2,613.1L260.1,618.1L255.2,617.0L254.1,622.0L249.2,621.0L248.1,625.9L243.2,624.9L242.1,629.8L237.2,628.8L236.1,633.7L231.2,632.7L229.0,642.6L219.2,640.5L218.1,645.5L213.1,644.5L214.3,639.5L209.3,638.5L208.2,643.4L203.3,642.4L202.2,647.3L197.3,646.3L196.2,651.3L191.3,650.2L190.2,655.2L185.3,654.1L184.2,659.1L179.3,658.1L178.2,663.0L183.1,664.1L182.0,669.0L177.0,668.0L175.9,673.0L171.0,671.9L169.9,676.9L165.0,675.8L163.9,680.8L159.0,679.8L157.8,684.7L177.5,688.9L176.4,693.9L156.7,689.7L157.8,684.7L152.9,683.7L150.7,693.6L145.8,692.6L144.7,697.6L149.6,698.6L148.5,703.6L143.5,702.6L144.7,697.6L134.8,695.5L133.7,700.5L138.6,701.5L137.5,706.5L142.4,707.5L141.3,712.5L136.4,711.5L137.5,706.5L132.6,705.5L131.5,710.4L126.5,709.4L127.7,704.4L122.8,703.4L121.6,708.4L116.7,707.3L115.6,712.3L110.7,711.3L109.5,716.2L114.5,717.3L113.3,722.3L108.4,721.2L107.3,726.2L112.2,727.2L111.1,732.2L116.0,733.3L114.9,738.3L119.8,739.3L118.7,744.3L108.8,742.2L107.7,747.2L92.9,744.1L90.7,754.1L85.7,753.0L84.6,758.0L89.5,759.0L88.4,764.0L93.3,765.1L94.5,760.1L99.4,761.1L100.5,756.1L105.4,757.2L104.3,762.2L99.4,761.1L97.1,771.1L102.0,772.2L103.2,767.2L108.1,768.2L109.2,763.2L114.2,764.3L113.0,769.3L118.0,770.3L119.1,765.3L124.0,766.3L122.9,771.3L127.8,772.4L128.9,767.4L133.9,768.4L132.7,773.4L127.8,772.4L126.7,777.4L121.8,776.3L120.6,781.3L110.8,779.3L111.9,774.3L102.0,772.2L100.9,777.2L105.8,778.2L104.7,783.2L119.5,786.3L117.2,796.4L112.3,795.3L111.2,800.3L106.3,799.3L105.1,804.3L100.2,803.2L99.1,808.3L94.1,807.2L93.0,812.2L88.1,811.2L86.9,816.2L82.0,815.2L80.8,820.2L85.8,821.2L84.6,826.2L89.6,827.3L90.7,822.3L95.7,823.3L97.9,813.3L107.8,815.4L110.1,805.3L115.0,806.4L116.1,801.4L121.1,802.4L123.3,792.4L128.2,793.4L129.4,788.4L134.3,789.5L136.6,779.5L141.5,780.5L143.7,770.5L138.8,769.5L139.9,764.5L130.1,762.4L131.2,757.4L141.0,759.5L142.2,754.5L132.3,752.4L135.7,737.4L130.8,736.4L129.6,741.4L124.7,740.3L125.8,735.3L130.8,736.4L131.9,731.4L127.0,730.4L128.1,725.4L133.0,726.4L134.1,721.4L119.4,718.3L120.5,713.3L135.3,716.4L134.1,721.4L144.0,723.5L142.9,728.5L147.8,729.5L146.7,734.5L141.7,733.5L142.9,728.5L133.0,726.4L131.9,731.4L136.8,732.4L135.7,737.4L140.6,738.5L138.4,748.4L143.3,749.5L144.4,744.5L154.3,746.6L153.1,751.6L143.3,749.5L142.2,754.5L147.1,755.5L146.0,760.5L150.9,761.5L152.0,756.6L156.9,757.6L159.2,747.6L164.1,748.6L165.2,743.7L170.2,744.7L169.0,749.7L174.0,750.7L178.4,730.8L168.6,728.7L169.7,723.7L179.5,725.8L178.4,730.8L183.3,731.8L181.1,741.8L186.0,742.8L189.4,727.9L194.3,728.9L195.4,723.9L205.3,726.0L207.5,716.0L212.4,717.1L213.5,712.1L218.4,713.1L220.6,703.2L210.8,701.1L211.9,696.1L221.7,698.2L220.6,703.2L225.6,704.2L226.7,699.2L231.6,700.3L233.8,690.3L238.7,691.4L239.8,686.4L244.7,687.4L248.0,672.6L257.9,674.6L258.9,669.7L263.9,670.7L266.1,660.8L271.0,661.8L272.1,656.9L277.0,657.9L278.1,652.9L283.0,654.0L285.2,644.1L280.3,643.0L281.3,638.1L286.3,639.1L285.2,644.1L290.1,645.1L291.2,640.1L296.1,641.2L297.2,636.2L302.1,637.3L304.2,627.4L309.1,628.4L310.2,623.4L315.1,624.5L316.2,619.5L321.1,620.6L322.2,615.6L327.1,616.7L329.3,606.8L334.2,607.8L335.3,602.9L340.2,603.9L341.2,599.0L346.2,600.0L348.3,590.1L353.2,591.2L354.3,586.2L359.2,587.2L360.3,582.3L365.2,583.3L366.2,578.4L361.3,577.4L362.4,572.5L367.3,573.5L368.4,568.6L378.2,570.6L376.0,580.5L371.1,579.4L370.1,584.4L365.2,583.3L364.1,588.3L359.2,587.2L357.0,597.1L352.1,596.1L351.1,601.0L346.2,600.0L344.0,609.9L339.1,608.8L338.0,613.8L333.1,612.7L332.0,617.7L327.1,616.7L325.0,626.5L320.0,625.5L319.0,630.5L314.1,629.4L313.0,634.4L308.1,633.3L305.9,643.2L301.0,642.2L299.9,647.2L295.0,646.1L293.9,651.1L289.0,650.0L287.9,655.0L283.0,654.0L280.8,663.9L275.9,662.8L274.8,667.8L269.9,666.8L268.8,671.7L263.9,670.7L261.7,680.6L256.8,679.6L255.7,684.6L250.7,683.5L249.6,688.5L244.7,687.4L242.5,697.4L237.6,696.4L236.5,701.3L231.6,700.3L229.4,710.2L224.5,709.2L223.3,714.2L218.4,713.1L217.3,718.1L222.2,719.2L221.1,724.1L211.3,722.1L210.2,727.0L205.3,726.0L203.0,736.0L198.1,734.9L195.9,744.9L191.0,743.9L189.9,748.9L184.9,747.8L182.7,757.8L177.8,756.8L174.4,771.8L169.5,770.7L168.4,775.7L163.4,774.7L162.3,779.7L157.4,778.6L156.3,783.6L151.3,782.6L150.2,787.6L145.3,786.5L143.0,796.6L138.1,795.5L137.0,800.5L132.0,799.5L129.8,809.5L124.9,808.5L123.7,813.5L128.7,814.5L127.5,819.5L122.6,818.5L123.7,813.5L118.8,812.4L116.5,822.5L121.5,823.5L118.1,838.6L113.1,837.5L115.4,827.5L105.5,825.4L103.3,835.4L108.2,836.5L107.1,841.5L112.0,842.6L109.7,852.6L114.7,853.7L115.8,848.6L120.8,849.7L119.6,854.7L124.6,855.8L128.0,840.7L132.9,841.7L131.8,846.7L136.7,847.8L135.6,852.8L130.7,851.8L129.5,856.8L124.6,855.8L123.4,860.8ZM40.6,838.0L41.7,832.9L36.8,831.9L35.6,836.9ZM66.4,838.2L71.4,839.2L72.5,834.2L77.4,835.2L78.6,830.2L83.5,831.3L84.6,826.2L79.7,825.2L80.8,820.2L75.9,819.1L78.2,809.1L63.4,806.0L62.2,811.0L47.4,807.8L45.2,817.9L55.0,820.0L52.7,830.0L47.8,829.0L46.7,834.0L56.5,836.1L58.8,826.0L68.7,828.1ZM156.5,852.0L151.6,850.9L152.7,845.9L157.6,846.9ZM47.8,829.0L48.9,823.9L44.0,822.9L42.9,827.9ZM-6.5,817.5L-5.3,812.4L-10.3,811.4L-11.4,816.4ZM-5.3,812.4L9.5,815.6L10.6,810.6L5.7,809.5L8.0,799.5L3.0,798.4L1.9,803.5L-3.0,802.4ZM-10.3,811.4L-9.1,806.4L-14.0,805.3L-15.2,810.4ZM168.6,844.0L163.7,843.0L165.9,832.9L161.0,831.9L162.1,826.9L167.0,827.9L165.9,832.9L170.9,834.0ZM158.7,841.9L148.9,839.8L150.0,834.8L159.9,836.9ZM64.9,822.1L60.0,821.0L61.1,816.0L66.0,817.0ZM135.2,831.7L125.3,829.6L126.4,824.6L136.3,826.6L137.4,821.6L142.4,822.7L141.2,827.7L136.3,826.6ZM31.5,809.7L21.6,807.6L22.8,802.6L32.6,804.7ZM156.0,830.8L151.1,829.8L152.2,824.8L157.2,825.8ZM47.4,807.8L48.6,802.8L43.6,801.8L42.5,806.8ZM88.1,811.2L89.2,806.2L84.3,805.1L83.1,810.1ZM63.4,806.0L65.7,795.9L70.6,797.0L71.7,792.0L61.9,789.9L60.7,794.9L55.8,793.9L53.5,803.9ZM43.6,801.8L44.8,796.8L39.9,795.7L38.7,800.7ZM183.0,826.0L178.0,825.0L180.3,814.9L185.2,816.0ZM168.2,822.9L163.2,821.8L164.4,816.8L169.3,817.9ZM153.4,819.7L148.4,818.7L149.5,813.7L154.5,814.7L155.6,809.7L160.5,810.8L159.4,815.8L154.5,814.7ZM84.3,805.1L85.4,800.1L80.5,799.1L79.3,804.1ZM44.8,796.8L49.7,797.8L50.9,792.8L55.8,793.9L58.1,783.8L53.1,782.8L52.0,787.8L47.1,786.8ZM39.9,795.7L41.0,790.7L36.1,789.7L34.9,794.7ZM20.1,791.6L21.3,786.6L16.4,785.5L15.2,790.5ZM139.7,811.6L134.7,810.6L135.9,805.5L140.8,806.6ZM100.2,803.2L101.3,798.2L106.3,799.3L107.4,794.3L112.3,795.3L113.4,790.3L103.6,788.2L104.7,783.2L99.8,782.2L98.7,787.2L78.9,783.0L80.1,778.0L94.9,781.1L97.1,771.1L87.3,769.0L86.1,774.0L76.3,772.0L77.4,767.0L87.3,769.0L88.4,764.0L73.6,760.9L72.5,765.9L67.6,764.9L66.4,769.9L71.3,770.9L70.2,775.9L60.4,773.8L59.2,778.8L74.0,782.0L71.7,792.0L76.7,793.0L75.5,798.0L80.5,799.1L81.6,794.1L86.5,795.1L85.4,800.1ZM74.4,803.0L75.5,798.0L70.6,797.0L69.5,802.0ZM21.3,786.6L31.1,788.6L32.3,783.6L22.4,781.5ZM96.4,797.2L91.5,796.1L92.6,791.1L97.5,792.2ZM47.1,786.8L49.4,776.8L34.6,773.6L35.7,768.6L30.8,767.6L28.5,777.6L33.4,778.6L32.3,783.6L37.2,784.7L38.4,779.7L43.3,780.7L42.1,785.7ZM191.3,812.0L186.3,811.0L187.5,806.0L192.4,807.0L193.5,802.0L198.4,803.0L197.3,808.0L192.4,807.0ZM171.5,807.8L161.7,805.7L162.8,800.7L167.7,801.8L168.8,796.8L173.8,797.8ZM151.8,803.7L146.9,802.6L148.0,797.6L152.9,798.6ZM49.4,776.8L54.3,777.8L55.4,772.8L50.5,771.8ZM188.6,800.9L183.6,799.9L185.9,789.9L190.8,790.9ZM60.4,773.8L61.5,768.8L56.6,767.8L55.4,772.8ZM35.7,768.6L40.6,769.7L41.8,764.7L36.9,763.6ZM165.0,790.7L160.1,789.7L161.2,784.7L166.1,785.7ZM56.6,767.8L57.7,762.8L67.6,764.9L68.7,759.9L73.6,760.9L74.8,755.9L64.9,753.8L63.8,758.8L58.8,757.8L61.1,747.8L56.2,746.8L55.1,751.8L50.1,750.7L49.0,755.7L53.9,756.8L51.6,766.8ZM200.7,793.0L195.7,792.0L196.8,787.0L191.9,785.9L193.0,780.9L202.9,783.0ZM121.8,776.3L122.9,771.3L118.0,770.3L116.8,775.3ZM182.1,783.8L177.1,782.8L179.4,772.8L184.3,773.8ZM47.9,760.7L49.0,755.7L44.1,754.7L42.9,759.7ZM74.8,755.9L79.7,757.0L80.8,752.0L75.9,750.9ZM223.7,782.2L218.8,781.1L219.9,776.1L215.0,775.1L216.1,770.1L221.0,771.1L219.9,776.1L224.8,777.2L227.1,767.2L222.1,766.1L223.2,761.1L218.3,760.1L220.5,750.1L225.5,751.1L223.2,761.1L228.2,762.2L229.3,757.2L234.2,758.2L233.1,763.2L228.2,762.2L227.1,767.2L232.0,768.2L229.8,778.2L224.8,777.2ZM204.0,778.0L199.1,777.0L200.2,772.0L205.1,773.0L207.3,763.0L212.3,764.0L210.0,774.0L205.1,773.0ZM153.6,772.6L155.8,762.6L150.9,761.5L148.7,771.5ZM139.9,764.5L144.9,765.5L146.0,760.5L141.0,759.5ZM85.7,753.0L86.9,748.0L81.9,747.0L80.8,752.0ZM75.9,750.9L77.0,745.9L62.3,742.8L61.1,747.8ZM155.8,762.6L160.8,763.6L161.9,758.6L156.9,757.6ZM116.4,754.3L111.5,753.2L112.6,748.2L117.5,749.3ZM161.9,758.6L166.8,759.7L169.0,749.7L164.1,748.6ZM92.9,744.1L94.1,739.1L99.0,740.1L100.1,735.1L90.3,733.1L89.1,738.0L84.2,737.0L83.1,742.0ZM202.4,762.0L197.5,760.9L198.6,755.9L193.7,754.9L192.6,759.9L187.6,758.8L188.7,753.8L193.7,754.9L194.8,749.9L204.6,752.0ZM108.8,742.2L110.0,737.2L105.0,736.2L103.9,741.2ZM84.2,737.0L85.3,732.0L80.4,731.0L79.3,736.0ZM78.2,741.0L79.3,736.0L74.4,734.9L73.2,739.9ZM213.4,759.1L208.5,758.0L209.6,753.0L214.5,754.1ZM105.0,736.2L107.3,726.2L102.4,725.2L100.1,735.1ZM90.3,733.1L91.4,728.1L86.5,727.0L85.3,732.0ZM249.0,761.3L253.9,762.4L255.0,757.4L250.1,756.3ZM91.4,728.1L96.3,729.1L97.4,724.1L92.5,723.1ZM215.6,749.1L210.7,748.0L211.8,743.0L216.7,744.1ZM166.3,738.7L161.4,737.6L162.5,732.6L167.5,733.7ZM156.5,736.6L151.6,735.6L154.9,720.6L164.8,722.7L163.7,727.7L158.7,726.6ZM102.4,725.2L103.5,720.2L98.6,719.1L97.4,724.1ZM226.6,746.2L221.6,745.1L222.7,740.1L227.7,741.2ZM108.4,721.2L109.5,716.2L104.6,715.2L103.5,720.2ZM104.6,715.2L105.8,710.2L100.8,709.2L99.7,714.2ZM110.7,711.3L111.8,706.3L106.9,705.2L105.8,710.2ZM229.9,731.2L225.0,730.2L226.1,725.2L231.0,726.2ZM161.0,716.7L156.1,715.6L158.3,705.7L168.1,707.7L167.0,712.7L162.1,711.7ZM116.7,707.3L117.8,702.3L112.9,701.3L111.8,706.3ZM250.7,730.4L245.7,729.3L246.9,724.3L251.8,725.4ZM191.6,717.9L186.7,716.9L187.8,711.9L192.7,712.9ZM132.6,705.5L133.7,700.5L128.8,699.4L127.7,704.4ZM122.8,703.4L123.9,698.4L119.0,697.4L117.8,702.3ZM232.1,721.2L227.2,720.2L228.3,715.2L233.2,716.3ZM178.0,709.8L173.0,708.8L174.2,703.8L179.1,704.8ZM128.8,699.4L129.9,694.5L125.0,693.4L123.9,698.4ZM208.6,711.1L203.7,710.0L204.8,705.1L209.7,706.1ZM134.8,695.5L136.0,690.5L131.0,689.5L129.9,694.5ZM268.7,718.5L263.8,717.5L264.9,712.5L269.8,713.6ZM239.2,712.3L234.3,711.3L235.4,706.3L240.3,707.3ZM199.9,704.0L194.9,703.0L196.1,698.0L201.0,699.0ZM136.0,690.5L140.9,691.6L142.0,686.6L137.1,685.6ZM142.0,686.6L146.9,687.6L148.0,682.7L143.1,681.6ZM606.2,779.2L601.2,778.2L602.3,773.2L607.2,774.2L608.3,769.3L613.2,770.3L612.2,775.3L607.2,774.2ZM285.7,711.7L280.8,710.7L281.9,705.7L286.8,706.7ZM251.3,704.4L246.3,703.4L247.4,698.4L252.4,699.5ZM207.0,695.1L202.1,694.1L203.2,689.1L208.1,690.1ZM152.9,683.7L154.0,678.7L149.1,677.7L148.0,682.7ZM277.0,704.6L272.0,703.6L273.1,698.6L278.0,699.7ZM193.4,687.0L188.4,686.0L189.6,681.0L194.5,682.1ZM159.0,679.8L160.1,674.8L155.2,673.8L154.0,678.7ZM219.0,687.2L214.1,686.2L215.2,681.2L210.3,680.2L212.5,670.3L217.4,671.3L216.3,676.3L221.3,677.3ZM165.0,675.8L166.1,670.9L161.2,669.8L160.1,674.8ZM195.6,677.1L190.7,676.1L191.8,671.1L196.7,672.1ZM171.0,671.9L172.1,667.0L167.2,665.9L166.1,670.9ZM206.5,674.2L201.6,673.2L202.7,668.2L207.6,669.2ZM177.0,668.0L178.2,663.0L173.2,662.0L172.1,667.0ZM167.2,665.9L168.3,661.0L163.4,659.9L162.3,664.9ZM192.9,666.1L188.0,665.1L189.1,660.1L194.0,661.2ZM173.2,662.0L174.4,657.0L169.4,656.0L168.3,661.0ZM208.7,664.3L198.9,662.2L200.0,657.3L209.8,659.3ZM179.3,658.1L180.4,653.1L175.5,652.1L174.4,657.0ZM224.6,662.4L219.7,661.4L220.8,656.4L215.8,655.4L217.0,650.4L221.9,651.5L220.8,656.4L225.7,657.5ZM185.3,654.1L186.4,649.2L181.5,648.2L180.4,653.1ZM191.3,650.2L192.4,645.3L187.5,644.2L186.4,649.2ZM241.5,655.6L236.6,654.6L237.7,649.6L242.6,650.7ZM197.3,646.3L198.4,641.4L193.5,640.3L192.4,645.3ZM203.3,642.4L204.4,637.4L199.5,636.4L198.4,641.4ZM219.2,640.5L220.3,635.6L215.4,634.6L214.3,639.5ZM209.3,638.5L210.5,633.5L205.5,632.5L204.4,637.4ZM244.8,640.7L239.9,639.7L241.0,634.8L245.9,635.8ZM220.3,635.6L225.2,636.6L226.3,631.7L221.4,630.6ZM215.4,634.6L216.5,629.6L211.6,628.6L210.5,633.5ZM231.2,632.7L232.3,627.8L227.4,626.7L226.3,631.7ZM221.4,630.6L222.5,625.7L217.6,624.7L216.5,629.6ZM941.6,776.9L936.6,775.9L937.6,770.9L932.7,769.9L933.6,764.9L938.6,765.9L937.6,770.9L942.6,772.0ZM910.9,775.7L912.9,765.7L907.9,764.7L908.9,759.7L904.0,758.6L905.0,753.7L900.0,752.6L898.1,762.6L903.0,763.6L902.0,768.6L907.0,769.7L906.0,774.7ZM237.2,628.8L238.3,623.8L233.4,622.8L232.3,627.8ZM227.4,626.7L228.5,621.8L223.6,620.7L222.5,625.7ZM262.8,629.0L257.9,628.0L259.0,623.0L263.9,624.1ZM243.2,624.9L244.3,619.9L239.4,618.9L238.3,623.8ZM233.4,622.8L234.5,617.9L229.6,616.8L228.5,621.8ZM249.2,621.0L250.3,616.0L245.4,615.0L244.3,619.9ZM239.4,618.9L240.5,614.0L235.6,612.9L234.5,617.9ZM934.6,759.9L929.7,758.9L930.6,753.9L925.7,752.8L926.7,747.8L921.7,746.8L922.7,741.8L917.8,740.8L918.8,735.8L913.8,734.8L914.8,729.8L909.9,728.8L910.8,723.8L915.8,724.8L914.8,729.8L919.7,730.8L918.8,735.8L923.7,736.8L922.7,741.8L927.7,742.9L926.7,747.8L931.6,748.9L930.6,753.9L935.6,754.9ZM900.0,752.6L901.0,747.6L891.1,745.6L890.1,750.5ZM284.6,623.2L279.7,622.2L280.8,617.3L285.7,618.3ZM255.2,617.0L256.3,612.1L251.4,611.1L250.3,616.0ZM245.4,615.0L246.5,610.0L241.6,609.0L240.5,614.0ZM891.1,745.6L893.1,735.6L888.1,734.6L886.2,744.5ZM251.4,611.1L252.5,606.1L247.6,605.1L246.5,610.0ZM257.4,607.2L258.5,602.2L253.6,601.2L252.5,606.1ZM263.4,603.3L264.5,598.3L259.6,597.3L258.5,602.2ZM269.4,599.3L270.5,594.4L265.6,593.4L264.5,598.3ZM275.4,595.4L276.5,590.5L271.6,589.5L270.5,594.4ZM281.4,591.5L282.4,586.6L277.5,585.6L276.5,590.5ZM877.3,711.5L878.3,706.6L873.3,705.5L874.3,700.6L864.5,698.5L863.5,703.5L868.4,704.5L867.4,709.5ZM287.3,587.6L288.4,582.7L283.5,581.7L282.4,586.6ZM293.3,583.7L294.4,578.8L289.5,577.8L288.4,582.7ZM943.4,715.1L944.4,710.1L939.4,709.1L938.4,714.0ZM864.5,698.5L866.4,688.6L861.5,687.5L862.5,682.6L857.6,681.5L858.5,676.6L853.6,675.5L854.6,670.6L849.7,669.6L850.7,664.6L845.7,663.6L846.7,658.6L841.8,657.6L842.8,652.6L837.9,651.6L835.9,661.5L840.8,662.5L839.8,667.5L844.7,668.5L843.8,673.5L848.7,674.5L847.7,679.5L852.6,680.5L851.6,685.5L856.6,686.5L855.6,691.5L860.5,692.5L859.5,697.5ZM299.3,579.8L300.4,574.9L295.5,573.9L294.4,578.8ZM939.4,709.1L940.4,704.1L935.5,703.1L934.5,708.0ZM919.7,704.9L914.7,703.9L915.7,698.9L910.8,697.9L911.8,692.9L906.8,691.9L905.9,696.8L900.9,695.8L901.9,690.9L897.0,689.8L898.0,684.9L893.0,683.8L894.0,678.9L898.9,679.9L898.0,684.9L902.9,685.9L901.9,690.9L906.8,691.9L907.8,686.9L912.7,688.0L911.8,692.9L921.6,695.0L922.6,690.0L917.7,689.0L918.7,684.0L913.7,683.0L914.7,678.0L919.6,679.1L918.7,684.0L923.6,685.1L922.6,690.0L927.5,691.1L926.6,696.0L921.6,695.0ZM643.9,647.0L639.0,646.0L640.0,641.0L644.9,642.1ZM305.3,575.9L306.4,571.0L301.5,570.0L300.4,574.9ZM311.3,572.0L312.4,567.1L307.5,566.1L306.4,571.0ZM908.8,682.0L903.9,680.9L904.8,676.0L899.9,674.9L900.9,670.0L896.0,668.9L895.0,673.9L890.1,672.9L891.0,667.9L886.1,666.9L887.1,661.9L882.2,660.9L883.2,655.9L888.1,657.0L887.1,661.9L892.0,663.0L891.0,667.9L896.0,668.9L897.0,664.0L901.9,665.0L902.9,660.1L907.8,661.1L906.8,666.1L901.9,665.0L900.9,670.0L910.8,672.0L911.7,667.1L916.7,668.1L915.7,673.1L910.8,672.0ZM339.0,562.4L334.1,561.4L335.2,556.5L340.1,557.5ZM871.3,663.8L866.4,662.7L867.4,657.8L872.3,658.8ZM640.2,615.3L635.3,614.3L636.3,609.3L641.2,610.4ZM670.7,616.5L665.8,615.5L666.8,610.6L671.7,611.6ZM352.0,549.7L347.1,548.7L348.2,543.8L353.1,544.8ZM897.9,659.0L893.0,658.0L894.0,653.1L889.1,652.0L890.0,647.1L895.0,648.1L894.0,653.1L898.9,654.1ZM868.4,652.8L863.5,651.8L864.5,646.9L859.5,645.8L860.5,640.9L865.4,641.9L864.5,646.9L869.4,647.9ZM884.1,651.0L879.2,650.0L880.2,645.0L875.3,644.0L876.3,639.0L871.3,638.0L872.3,633.1L877.2,634.1L876.3,639.0L881.2,640.1L880.2,645.0L885.1,646.0ZM662.9,604.6L658.0,603.6L659.0,598.6L663.9,599.7ZM845.8,637.8L840.8,636.8L842.8,626.9L847.7,627.9L848.7,623.0L858.6,625.0L857.6,630.0L852.6,628.9L851.7,633.9L846.7,632.8ZM835.9,635.7L831.0,634.7L832.0,629.8L836.9,630.8ZM654.1,597.6L649.2,596.6L650.2,591.7L655.1,592.7ZM369.9,538.0L365.0,537.0L366.1,532.1L371.0,533.1ZM833.0,624.8L828.1,623.8L829.1,618.8L834.0,619.9ZM818.2,621.7L813.3,620.7L814.3,615.8L819.2,616.8ZM381.8,530.3L377.0,529.2L378.0,524.3L382.9,525.4L384.0,520.4L388.9,521.5L389.9,516.6L394.8,517.6L395.9,512.7L400.8,513.7L401.8,508.8L406.7,509.8L405.7,514.7L400.8,513.7L399.7,518.6L394.8,517.6L393.8,522.5L388.9,521.5L387.8,526.4L382.9,525.4ZM662.1,583.9L657.2,582.8L658.2,577.9L663.1,578.9ZM923.5,633.5L918.6,632.5L919.5,627.5L914.6,626.5L915.6,621.5L920.5,622.6L921.5,617.6L926.4,618.7L925.4,623.6L930.3,624.6L929.4,629.6L924.4,628.5ZM839.9,616.0L835.0,614.9L835.9,610.0L831.0,609.0L830.0,613.9L825.1,612.9L826.1,607.9L821.2,606.9L822.2,602.0L827.1,603.0L826.1,607.9L831.0,609.0L832.0,604.0L836.9,605.1L835.9,610.0L840.9,611.0ZM653.3,576.9L648.4,575.8L649.4,570.9L654.3,572.0ZM924.4,628.5L925.4,623.6L920.5,622.6L919.5,627.5ZM786.8,599.7L781.9,598.7L782.9,593.7L787.8,594.8ZM910.7,620.5L905.7,619.5L906.7,614.5L901.8,613.5L902.8,608.6L897.9,607.6L899.8,597.7L894.9,596.7L895.9,591.7L900.8,592.8L899.8,597.7L904.7,598.7L902.8,608.6L907.7,609.6L908.7,604.7L913.6,605.7L912.6,610.6L917.5,611.7L916.6,616.6L911.6,615.6ZM851.7,608.2L846.8,607.1L847.7,602.2L852.7,603.2ZM911.6,615.6L912.6,610.6L907.7,609.6L906.7,614.5ZM893.0,606.5L888.0,605.5L889.0,600.6L884.1,599.5L885.1,594.6L880.2,593.6L881.2,588.6L876.2,587.6L877.2,582.7L882.1,583.7L883.1,578.8L888.0,579.8L887.0,584.7L892.0,585.8L891.0,590.7L886.1,589.7L885.1,594.6L890.0,595.6L889.0,600.6L893.9,601.6ZM886.1,589.7L887.0,584.7L882.1,583.7L881.2,588.6ZM591.9,528.1L592.9,523.2L578.2,520.1L577.2,525.0ZM874.3,571.8L869.4,570.8L870.3,565.9L875.2,566.9ZM384.9,469.4L386.0,464.6L381.1,463.5L380.0,468.4ZM826.2,556.6L821.3,555.6L822.3,550.7L827.2,551.7ZM861.5,558.9L856.6,557.9L857.6,553.0L862.5,554.0ZM817.4,549.7L812.5,548.6L813.5,543.7L808.6,542.7L809.5,537.8L804.6,536.8L805.6,531.9L810.5,532.9L809.5,537.8L814.5,538.8L813.5,543.7L818.4,544.8ZM401.7,462.7L402.7,457.8L397.8,456.8L396.8,461.7ZM461.3,470.1L456.4,469.1L458.5,459.3L463.4,460.3ZM407.6,458.9L408.7,454.0L403.8,453.0L402.7,457.8ZM800.7,530.8L795.8,529.8L796.8,524.9L791.9,523.9L792.9,519.0L788.0,518.0L789.0,513.1L784.1,512.0L785.1,507.1L780.2,506.1L781.2,501.2L776.3,500.2L775.3,505.1L770.4,504.1L771.4,499.2L776.3,500.2L777.3,495.3L782.2,496.3L781.2,501.2L786.1,502.2L785.1,507.1L790.0,508.2L789.0,513.1L793.9,514.1L792.9,519.0L797.8,520.0L796.8,524.9L801.7,525.9ZM747.9,514.7L743.0,513.7L744.0,508.8L748.9,509.8ZM703.8,505.5L698.9,504.5L699.9,499.6L704.8,500.6ZM586.5,480.9L571.8,477.9L572.9,473.0L587.5,476.1ZM827.2,526.2L822.3,525.1L823.3,520.2L828.2,521.3ZM695.0,498.5L690.2,497.5L691.2,492.6L696.1,493.6ZM421.6,441.4L422.6,436.5L427.5,437.5L428.6,432.6L414.0,429.6L411.8,439.3ZM853.7,521.5L848.8,520.4L849.8,515.5L854.7,516.6ZM692.2,487.7L687.3,486.7L689.3,476.9L694.2,477.9ZM844.9,514.5L840.0,513.5L841.0,508.6L826.3,505.5L827.3,500.6L822.4,499.6L823.3,494.7L828.2,495.7L827.3,500.6L841.9,503.7L841.0,508.6L845.8,509.6ZM732.3,491.0L727.4,490.0L728.4,485.1L733.3,486.1ZM283.6,397.3L278.7,396.2L282.0,381.7L291.7,383.7L290.6,388.6L285.7,387.5ZM772.4,494.3L767.5,493.3L768.5,488.4L773.4,489.4ZM455.1,428.0L450.2,427.0L451.2,422.1L456.1,423.1ZM695.2,473.1L690.3,472.0L691.3,467.2L696.2,468.2ZM759.8,481.4L754.9,480.4L755.9,475.5L751.0,474.5L752.0,469.6L756.9,470.6L755.9,475.5L760.8,476.6ZM452.3,417.2L447.4,416.2L448.5,411.4L453.3,412.4ZM743.2,462.7L738.3,461.7L739.3,456.8L744.2,457.8ZM390.1,282.8L380.5,280.7L381.5,275.9L391.2,277.9ZM413.1,247.3L408.3,246.3L409.3,241.5L414.2,242.5ZM440.5,237.9L435.6,236.9L436.7,232.1L441.5,233.1ZM586.8,263.3L581.9,262.3L584.0,252.6L579.1,251.6L580.2,246.8L575.3,245.8L576.3,241.0L571.5,240.0L572.5,235.2L567.7,234.2L568.7,229.4L563.9,228.4L564.9,223.6L560.0,222.6L561.1,217.8L556.2,216.8L557.3,212.0L552.4,211.0L553.4,206.2L548.6,205.2L549.6,200.4L544.8,199.4L545.8,194.6L541.0,193.6L542.0,188.8L537.2,187.8L538.2,183.0L533.4,182.0L534.4,177.3L539.2,178.3L538.2,183.0L543.0,184.0L542.0,188.8L546.8,189.8L545.8,194.6L550.7,195.6L549.6,200.4L554.5,201.4L553.4,206.2L558.3,207.2L557.3,212.0L562.1,213.0L561.1,217.8L565.9,218.8L564.9,223.6L569.7,224.6L568.7,229.4L573.5,230.4L572.5,235.2L577.4,236.2L576.3,241.0L581.2,242.0L580.2,246.8L585.0,247.8L584.0,252.6L588.8,253.6ZM490.9,238.3L486.1,237.3L487.1,232.5L492.0,233.5ZM555.9,241.8L551.1,240.8L552.1,236.0L557.0,237.0ZM517.2,233.8L512.4,232.7L513.4,227.9L518.2,229.0ZM460.2,216.9L455.4,215.9L456.4,211.1L461.2,212.1ZM451.6,210.1L446.7,209.1L447.8,204.3L452.6,205.3ZM496.1,214.3L491.3,213.3L492.3,208.5L497.2,209.5ZM535.9,217.6L531.0,216.6L532.0,211.8L527.2,210.8L528.2,206.0L533.1,207.0L532.0,211.8L536.9,212.8ZM487.5,207.5L482.7,206.5L483.7,201.7L488.5,202.7ZM667.6,239.9L662.7,238.9L663.7,234.1L668.6,235.1ZM475.1,194.9L470.2,193.9L471.3,189.2L476.1,190.2ZM529.3,201.2L524.4,200.2L525.5,195.4L530.3,196.4ZM519.6,199.2L514.8,198.2L515.8,193.4L520.6,194.4ZM466.4,188.2L461.6,187.2L462.7,182.4L467.5,183.4ZM849.9,262.7L845.1,261.7L846.0,256.9L850.9,257.9ZM757.8,243.6L752.9,242.6L753.9,237.8L758.8,238.8ZM573.8,205.4L569.0,204.4L570.0,199.6L574.8,200.6ZM793.7,241.0L788.8,240.0L789.8,235.2L794.7,236.2ZM776.3,227.4L771.4,226.4L772.4,221.6L777.2,222.6L778.2,217.8L783.1,218.8L782.1,223.6L777.2,222.6ZM563.4,183.3L558.6,182.3L559.6,177.5L564.4,178.5ZM560.6,172.7L555.8,171.7L556.8,166.9L552.0,165.9L553.0,161.2L548.2,160.2L549.2,155.4L544.4,154.4L545.4,149.6L550.2,150.6L549.2,155.4L554.0,156.4L553.0,161.2L557.8,162.2L556.8,166.9L561.6,167.9ZM711.5,199.0L706.6,198.0L707.6,193.2L712.5,194.2ZM794.7,211.2L789.9,210.2L790.9,205.4L795.7,206.4L796.7,201.7L801.5,202.7L800.5,207.4L795.7,206.4ZM524.0,155.2L525.1,150.4L520.2,149.4L519.2,154.2ZM520.2,149.4L521.3,144.6L516.4,143.6L515.4,148.4ZM537.8,138.1L538.8,133.3L534.0,132.3L533.0,137.1ZM530.2,126.5L525.4,125.5L526.4,120.8L531.2,121.8ZM815.2,160.6L817.1,151.1L812.3,150.1L814.2,140.6L804.6,138.6L803.6,143.3L808.4,144.3L806.5,153.9L801.6,152.9L800.7,157.6Z" fill="#c0c0c0" fill-rule="evenodd"/>
<path d="M42.1,854.1L43.2,849.1L38.3,848.0L39.4,843.0L34.5,841.9L35.6,836.9L30.7,835.9L31.8,830.8L26.9,829.8L24.6,839.8L29.6,840.9L28.4,845.9L33.3,847.0L32.2,852.0ZM22.3,849.9L23.5,844.9L3.7,840.7L7.2,825.6L2.2,824.6L3.4,819.6L-1.6,818.5L-5.0,833.6L-0.1,834.6L-2.4,844.7ZM81.6,726.0L82.7,721.0L97.4,724.1L98.6,719.1L103.5,720.2L104.6,715.2L99.7,714.2L100.8,709.2L95.9,708.1L93.7,718.1L78.9,715.0L80.0,710.0L75.1,709.0L74.0,714.0L69.1,712.9L67.9,717.9L72.9,718.9L71.7,723.9ZM604.9,810.3L605.9,805.3L610.9,806.3L613.0,796.3L622.8,798.4L621.8,803.4L631.7,805.5L633.8,795.5L609.1,790.3L607.0,800.3L602.0,799.3L601.0,804.3L596.0,803.2L597.1,798.2L592.1,797.2L593.2,792.2L588.2,791.1L589.3,786.1L574.5,783.0L573.4,788.0L563.5,785.9L561.4,795.9L571.3,798.0L572.4,793.0L577.3,794.0L578.4,789.0L583.3,790.1L582.3,795.1L587.2,796.1L586.2,801.1L591.1,802.2L590.1,807.2ZM936.7,801.9L937.7,796.9L942.6,798.0L943.6,793.0L948.6,794.0L949.5,789.0L954.5,790.1L957.4,775.1L952.4,774.0L951.5,779.0L946.5,778.0L944.6,788.0L939.6,786.9L938.7,791.9L933.7,790.9L931.7,800.9ZM924.8,783.8L925.8,778.8L920.8,777.8L921.8,772.8L911.9,770.7L910.9,775.7L906.0,774.7L905.0,779.7ZM957.4,775.1L967.3,777.2L968.3,772.2L963.3,771.1L964.3,766.1L959.3,765.1ZM975.1,763.2L977.1,753.2L982.0,754.3L983.9,744.3L974.1,742.2L971.2,757.2L966.2,756.2L965.2,761.1ZM953.3,743.1L954.3,738.1L944.4,736.0L943.5,741.0ZM643.7,672.8L646.8,658.0L651.7,659.0L652.7,654.0L657.6,655.1L658.6,650.1L663.6,651.2L664.6,646.2L669.5,647.2L670.5,642.3L675.4,643.3L677.5,633.4L692.2,636.5L691.2,641.5L696.1,642.5L695.1,647.4L704.9,649.5L706.0,644.6L701.0,643.5L703.1,633.6L688.3,630.5L689.3,625.6L674.6,622.5L672.6,632.4L667.6,631.4L666.6,636.3L661.7,635.3L660.7,640.2L655.8,639.2L653.7,649.1L648.8,648.1L647.8,653.0L642.9,652.0L640.8,661.9L635.9,660.8L634.9,665.8L629.9,664.8L628.9,669.7ZM377.1,575.6L378.2,570.6L368.4,568.6L367.3,573.5ZM711.9,640.6L713.9,630.8L709.0,629.7L707.0,639.6ZM835.9,661.5L837.9,651.6L828.0,649.5L829.0,644.6L824.1,643.6L825.1,638.6L820.2,637.6L821.2,632.6L811.3,630.6L812.3,625.6L807.4,624.6L808.4,619.7L783.8,614.5L782.8,619.4L802.5,623.6L801.5,628.5L806.4,629.5L805.4,634.5L810.3,635.5L809.3,640.5L819.2,642.5L818.2,647.5L823.1,648.5L822.1,653.5L832.0,655.5L831.0,660.5ZM444.0,574.1L445.0,569.2L440.2,568.2L439.1,573.1ZM705.1,623.7L706.1,618.8L696.3,616.7L695.3,621.7ZM479.3,576.4L482.5,561.6L472.7,559.6L470.6,569.4L475.5,570.5L474.4,575.4ZM924.5,654.3L926.5,644.4L936.3,646.5L937.3,641.5L947.1,643.6L948.1,638.6L953.0,639.7L954.9,629.8L950.0,628.8L951.0,623.8L946.1,622.8L944.1,632.7L939.2,631.6L938.2,636.6L928.4,634.5L927.4,639.5L922.5,638.4L921.5,643.4L911.7,641.3L909.7,651.2ZM462.9,557.5L464.0,552.6L459.1,551.6L458.0,556.5ZM601.2,581.4L603.2,571.5L593.4,569.5L592.4,574.4L597.3,575.4L596.3,580.3ZM493.4,558.8L494.4,553.9L484.6,551.8L483.6,556.7ZM698.5,581.2L701.5,566.4L691.7,564.4L690.7,569.3L695.6,570.3L693.6,580.2ZM473.1,534.0L475.2,524.2L465.4,522.1L464.3,527.0L469.2,528.1L468.2,533.0ZM391.0,511.7L393.1,501.9L398.0,502.9L402.3,483.3L392.5,481.3L393.6,476.4L383.8,474.3L384.9,469.4L375.1,467.4L373.0,477.2L382.8,479.2L381.7,484.1L391.5,486.2L388.3,500.8L383.4,499.8L381.2,509.6ZM531.1,525.6L533.2,515.8L528.3,514.8L529.3,509.9L524.4,508.9L521.3,523.6ZM507.7,515.6L509.8,505.8L500.0,503.7L497.9,513.6ZM577.2,525.0L578.2,520.1L588.0,522.2L590.1,512.4L580.3,510.3L579.3,515.2L574.4,514.2L573.3,519.1L568.4,518.1L567.4,523.0ZM509.8,505.8L519.5,507.8L520.6,502.9L510.8,500.9ZM695.7,544.7L698.8,530.0L703.7,531.0L704.7,526.1L714.5,528.2L715.5,523.2L735.1,527.3L737.1,517.5L712.6,512.4L711.6,517.3L706.7,516.3L705.7,521.2L700.8,520.2L699.8,525.1L694.9,524.1L693.9,529.0L689.0,527.9L688.0,532.8L692.9,533.9L690.8,543.7ZM893.9,575.9L895.9,566.1L890.9,565.1L891.9,560.1L887.0,559.1L888.0,554.2L878.2,552.2L876.2,562.0L886.0,564.0L885.1,569.0L890.0,570.0L889.0,574.9ZM555.8,505.2L556.9,500.3L561.8,501.3L562.8,496.4L567.7,497.5L568.7,492.6L559.0,490.5L557.9,495.4L548.1,493.4L547.1,498.3L552.0,499.3L551.0,504.2ZM214.3,433.7L215.4,428.9L220.2,429.9L221.3,425.0L226.2,426.0L228.4,416.3L218.7,414.3L216.5,424.0L211.6,423.0L210.5,427.8L205.6,426.8L204.5,431.7ZM611.7,506.7L612.7,501.8L607.8,500.7L608.9,495.8L589.3,491.8L588.3,496.6L598.1,498.7L597.0,503.6ZM421.2,466.8L422.2,461.9L412.5,459.9L411.4,464.8ZM461.3,470.1L463.4,460.3L458.5,459.3L456.4,469.1ZM238.1,418.3L239.2,413.5L244.1,414.5L245.2,409.6L250.0,410.6L251.1,405.8L256.0,406.8L258.2,397.0L253.3,396.0L252.2,400.9L247.3,399.9L246.3,404.7L241.4,403.7L240.3,408.6L235.4,407.6L233.3,417.3ZM869.4,545.2L870.3,540.3L875.2,541.3L876.2,536.4L881.1,537.4L883.1,527.6L888.0,528.6L889.0,523.7L879.2,521.7L878.2,526.6L873.3,525.6L871.3,535.4L866.4,534.4L864.5,544.2ZM586.5,480.9L587.5,476.1L572.9,473.0L571.8,477.9ZM415.7,445.2L416.7,440.4L411.8,439.3L412.9,434.5L408.0,433.5L405.9,443.2ZM446.0,446.5L448.1,436.7L443.2,435.7L441.1,445.5ZM443.2,435.7L444.3,430.8L439.4,429.8L438.3,434.7ZM428.6,432.6L429.6,427.8L419.9,425.7L418.8,430.6ZM283.6,397.3L285.7,387.5L290.6,388.6L291.7,383.7L282.0,381.7L278.7,396.2ZM430.7,422.9L431.7,418.0L436.6,419.1L438.7,409.3L443.6,410.3L444.6,405.5L449.5,406.5L451.6,396.8L456.5,397.8L457.5,392.9L462.4,393.9L464.5,384.2L469.4,385.2L470.4,380.4L460.7,378.4L461.7,373.5L456.9,372.5L454.8,382.2L459.6,383.2L458.6,388.1L453.7,387.0L452.7,391.9L447.8,390.9L446.8,395.7L441.9,394.7L440.8,399.6L436.0,398.6L433.9,408.3L429.0,407.3L425.8,421.9ZM270.1,389.4L272.2,379.6L277.1,380.7L281.4,361.2L276.6,360.2L274.4,369.9L269.5,368.9L265.2,388.3ZM409.3,357.5L412.5,343.0L397.9,339.9L396.8,344.8L401.7,345.8L399.6,355.5ZM341.3,343.3L343.4,333.6L328.9,330.6L327.8,335.4L332.7,336.4L331.6,341.3ZM382.3,341.7L383.3,336.9L378.5,335.9L377.4,340.7ZM728.8,408.9L730.8,399.2L725.9,398.2L723.9,407.9ZM373.6,334.9L375.8,325.2L370.9,324.2L372.0,319.3L357.4,316.3L356.3,321.1L366.0,323.2L363.9,332.8ZM351.5,320.1L352.6,315.3L338.0,312.3L339.1,307.4L343.9,308.5L345.0,303.6L335.3,301.6L332.1,316.1ZM712.3,390.3L713.3,385.4L708.4,384.4L709.4,379.5L704.6,378.5L702.6,388.2ZM694.8,376.5L695.8,371.6L691.0,370.6L693.0,360.9L697.9,361.9L699.9,352.3L695.0,351.2L697.0,341.6L701.9,342.6L703.9,332.9L708.7,333.9L710.7,324.2L715.6,325.3L717.6,315.6L712.7,314.6L711.7,319.4L706.9,318.4L705.9,323.2L701.0,322.2L699.0,331.9L694.2,330.9L691.1,345.4L686.3,344.4L684.3,354.1L689.1,355.1L688.1,359.9L683.3,358.9L681.2,368.6L686.1,369.6L685.1,374.5ZM409.1,311.9L412.3,297.4L402.6,295.4L400.5,305.1L405.3,306.1L404.3,310.9ZM362.7,292.2L365.9,277.7L356.2,275.7L355.2,280.5L350.3,279.5L349.3,284.3L358.9,286.3L357.9,291.2ZM374.5,284.5L378.8,265.3L383.6,266.3L385.7,256.7L390.6,257.7L391.6,252.9L396.5,253.9L398.6,244.3L403.4,245.3L406.6,230.8L401.8,229.8L400.7,234.6L395.9,233.6L393.8,243.2L388.9,242.2L386.8,251.9L382.0,250.8L380.9,255.7L376.1,254.6L373.9,264.3L369.1,263.3L368.0,268.1L372.9,269.1L369.7,283.5ZM390.1,282.8L391.2,277.9L381.5,275.9L380.5,280.7ZM392.1,227.8L394.2,218.2L399.0,219.2L400.1,214.4L419.4,218.5L420.5,213.7L425.3,214.7L426.4,209.9L431.2,210.9L433.3,201.3L438.1,202.3L440.2,192.7L445.0,193.7L447.1,184.1L452.0,185.1L454.0,175.6L458.9,176.6L459.9,171.8L464.7,172.8L466.8,163.3L457.2,161.2L455.1,170.8L450.3,169.8L449.2,174.6L444.4,173.6L442.3,183.1L437.5,182.1L435.4,191.7L430.5,190.7L428.4,200.3L423.6,199.3L421.5,208.9L407.0,205.9L406.0,210.7L396.3,208.6L395.2,213.4L390.4,212.4L387.2,226.8ZM586.8,263.3L587.8,258.4L583.0,257.4L581.9,262.3ZM757.6,293.7L758.6,288.9L763.4,289.9L764.4,285.1L759.6,284.1L760.5,279.3L750.8,277.2L748.9,286.9L753.7,287.9L752.7,292.7ZM667.6,239.9L668.6,235.1L663.7,234.1L662.7,238.9ZM619.1,229.8L620.2,225.0L625.0,226.1L626.0,221.3L630.8,222.3L631.9,217.5L636.7,218.5L637.7,213.7L642.5,214.7L644.6,205.1L649.4,206.1L651.4,196.5L656.3,197.5L658.3,188.0L653.4,186.9L652.4,191.7L647.6,190.7L646.6,195.5L641.7,194.5L639.7,204.1L634.9,203.1L632.9,212.7L628.0,211.7L627.0,216.5L622.2,215.5L621.2,220.3L616.3,219.2L614.3,228.8ZM505.1,196.2L506.1,191.4L511.0,192.4L512.0,187.6L516.8,188.6L518.9,179.0L528.5,181.0L530.6,171.5L520.9,169.5L519.9,174.3L510.3,172.3L507.2,186.6L502.3,185.6L500.3,195.2ZM484.0,176.8L485.1,172.0L475.4,170.0L474.4,174.8ZM886.8,255.3L888.7,245.7L883.9,244.7L882.9,249.5L873.2,247.5L874.2,242.7L869.3,241.7L867.4,251.3ZM486.1,167.3L487.2,162.5L472.7,159.5L471.6,164.3ZM933.3,249.9L935.2,240.3L930.4,239.3L931.3,234.5L921.6,232.5L919.7,242.1L929.4,244.1L928.5,248.9ZM850.9,232.9L853.8,218.5L844.1,216.5L845.1,211.7L840.3,210.7L841.2,205.9L831.5,203.9L832.5,199.1L822.8,197.1L823.8,192.3L814.1,190.3L815.1,185.5L810.3,184.5L811.3,179.7L801.6,177.7L802.6,173.0L792.9,171.0L790.9,180.5L800.6,182.5L799.6,187.3L809.3,189.3L808.3,194.1L813.2,195.1L812.2,199.9L821.9,201.9L820.9,206.7L830.6,208.7L829.6,213.5L839.3,215.5L838.3,220.3L843.1,221.3L842.2,226.1L847.0,227.1L846.0,231.9ZM711.5,199.0L712.5,194.2L707.6,193.2L706.6,198.0ZM529.9,151.4L531.9,141.8L522.3,139.8L520.2,149.4ZM512.7,137.8L513.7,133.1L518.5,134.1L519.5,129.3L509.9,127.3L508.9,132.1L504.0,131.1L503.0,135.8ZM520.6,124.6L522.6,115.0L527.4,116.0L528.5,111.3L533.3,112.3L534.3,107.5L524.7,105.5L523.6,110.3L518.8,109.3L517.8,114.0L513.0,113.0L511.9,117.8L507.1,116.8L506.1,121.6ZM809.3,164.4L810.3,159.6L800.7,157.6L801.6,152.9L782.3,148.9L783.3,144.1L759.2,139.1L760.1,134.3L755.3,133.3L756.3,128.6L746.7,126.6L747.6,121.8L738.0,119.8L739.0,115.1L729.3,113.1L730.3,108.3L725.5,107.3L726.5,102.6L716.8,100.6L717.8,95.8L708.2,93.8L709.2,89.1L699.6,87.1L700.6,82.4L695.7,81.4L696.7,76.6L687.1,74.6L688.1,69.9L668.8,65.9L667.8,70.7L677.5,72.6L676.5,77.4L686.1,79.4L685.1,84.1L694.7,86.1L693.7,90.9L703.4,92.9L702.4,97.6L712.0,99.6L711.0,104.3L715.9,105.3L714.9,110.1L724.5,112.1L723.5,116.8L728.3,117.8L727.4,122.6L737.0,124.6L736.0,129.4L745.7,131.4L744.7,136.1L754.3,138.1L753.3,142.9L763.0,144.9L762.0,149.6L795.8,156.6L794.9,161.4ZM801.6,152.9L806.5,153.9L808.4,144.3L803.6,143.3ZM549.8,105.7L550.8,101.0L541.2,99.0L542.2,94.2L537.4,93.2L535.3,102.8ZM821.9,152.1L822.9,147.3L813.3,145.3L812.3,150.1ZM814.2,140.6L815.2,135.8L810.4,134.8L809.4,139.6ZM549.1,85.7L551.1,76.2L555.9,77.2L556.9,72.5L561.7,73.5L563.8,64.0L568.6,65.0L569.6,60.3L560.0,58.3L557.9,67.8L553.1,66.8L552.1,71.5L532.9,67.5L531.8,72.3L536.7,73.3L534.6,82.8ZM581.2,52.8L582.3,48.0L572.6,46.1L571.6,50.8Z" fill="#0e0e0e" fill-rule="evenodd" stroke="#0e0e0e" stroke-width="0.6"/>
<path d="M257.1,-235.7L37.0,725.7M257.1,-235.7L1212.6,-39.7M352.2,-216.2L135.5,746.5M235.8,-142.6L1194.6,54.6M447.3,-196.7L234.0,767.3M214.4,-48.9L1176.4,149.6M542.6,-177.1L332.7,788.1M192.8,45.5L1158.2,245.2M638.0,-157.6L431.4,809.0M171.0,140.5L1139.8,341.6M733.5,-138.0L530.3,829.8M149.1,236.3L1121.2,438.6M829.1,-118.3L629.3,850.7M127.0,332.8L1102.6,536.4M924.8,-98.7L728.5,871.7M104.7,429.9L1083.8,634.8M1020.6,-79.1L827.7,892.6M82.3,527.8L1064.8,734.0M1116.5,-59.4L927.1,913.6M59.8,626.4L1045.8,834.0M1212.6,-39.7L1026.5,934.6M37.0,725.7L1026.5,934.6" fill="none" stroke="rgba(166,168,170,0.5)" stroke-width="1"/>
<path d="M397.0,212.0L412.2,213.2L465.5,161.2M511.1,129.5L544.1,91.5M549.2,72.5L559.3,62.3L570.7,53.4M577.1,42.0L583.4,41.3M512.4,170.1L528.9,173.9M503.5,193.0L523.8,177.7M617.7,223.4L658.3,187.9M678.5,59.8L777.5,144.8L787.6,139.7L797.0,149.8M802.9,171.3L857.5,219.5L860.0,227.1M879.0,239.8L889.2,248.7M934.8,234.7L942.5,244.9M805.5,154.9L815.6,157.4M722.0,317.5L690.3,350.5L696.6,358.1L689.0,365.7L696.6,374.6M697.0,544.2L703.3,531.5L722.4,522.6L740.1,529.5M892.3,528.9L874.6,544.2L875.8,550.5M793.4,625.3L803.5,625.3L839.0,660.8M925.3,658.3L926.5,653.2L958.3,641.8L958.3,630.4M946.3,809.6L974.2,780.4L980.5,772.8L984.3,762.7L993.2,753.8M919.6,789.3L927.2,786.7M637.4,677.6L657.7,659.9L685.6,635.8L700.8,645.9L704.6,652.3M566.9,804.5L579.4,797.8L601.6,819.9L618.9,804.5L634.3,816.1M202.8,433.4L225.9,417.1L252.8,397.8M264.4,386.2L274.0,365.1M460.8,386.2L424.2,422.8L416.5,430.5M332.8,315.0L339.5,304.4M401.0,310.0L408.0,304.5L404.0,297.0M366.5,332.3L370.4,324.6L366.5,318.8M398.0,354.5L399.0,344.0M368.4,272.6L378.0,263.0M354.0,288.0L360.7,278.4M367.3,271.6L399.1,235.1L389.4,220.6L397.1,210.0L412.5,212.9L464.5,160.9M501.1,190.8L518.5,179.2M375.7,473.9L392.0,489.3L390.1,500.8L382.4,510.5M451.7,393.0L424.8,423.8M74.0,715.0L84.0,723.0M502.0,511.0L507.0,515.0M514.0,507.0L519.0,511.0M526.0,520.0L531.0,524.0M551.0,501.0L556.0,505.0M562.0,496.0L567.0,500.0M578.0,479.0L583.0,483.0M577.0,521.0L582.0,525.0M599.0,501.0L604.0,505.0M469.0,531.0L474.0,535.0M461.0,557.0L466.0,561.0M488.0,558.0L493.0,562.0M475.0,571.0L480.0,575.0M442.0,573.0L447.0,577.0M372.0,575.0L377.0,579.0M459.0,467.0L464.0,471.0M697.0,573.0L702.0,577.0M698.0,624.0L703.0,628.0M710.0,638.0L715.0,642.0M596.0,576.0L601.0,580.0M705.0,387.0L710.0,391.0M726.0,406.0L731.0,410.0M755.0,287.0L760.0,291.0" fill="none" stroke="#d32be0" stroke-width="1.5"/>
<g transform="translate(634.3,336.8) rotate(-40.2)">
<rect x="-9" y="-16.5" width="21" height="30" fill="#e2e2e2"/>
<rect x="-20" y="-15" width="5.5" height="30" fill="#1c1c1c"/>
<rect x="14.5" y="-15" width="5.5" height="30" fill="#1c1c1c"/>
<rect x="-22" y="-19" width="9.5" height="10.5" rx="2.5" fill="#2c2c2c"/>
<rect x="-22" y="8.5" width="9.5" height="10.5" rx="2.5" fill="#2c2c2c"/>
<rect x="12.5" y="-19" width="9.5" height="10.5" rx="2.5" fill="#2c2c2c"/>
<rect x="12.5" y="8.5" width="9.5" height="10.5" rx="2.5" fill="#2c2c2c"/>
<rect x="-1.5" y="2.5" width="6.5" height="6.5" fill="#1e1e1e"/>
<path d="M-13 -6 L-9 2 M-12 4 L-9 9 M10 -8 L13 -2" stroke="#333" stroke-width="0.9" fill="none"/>
<rect x="9" y="9" width="3" height="3" fill="#f4f4f4"/>
</g>
</svg>
</div>
</body></html>
